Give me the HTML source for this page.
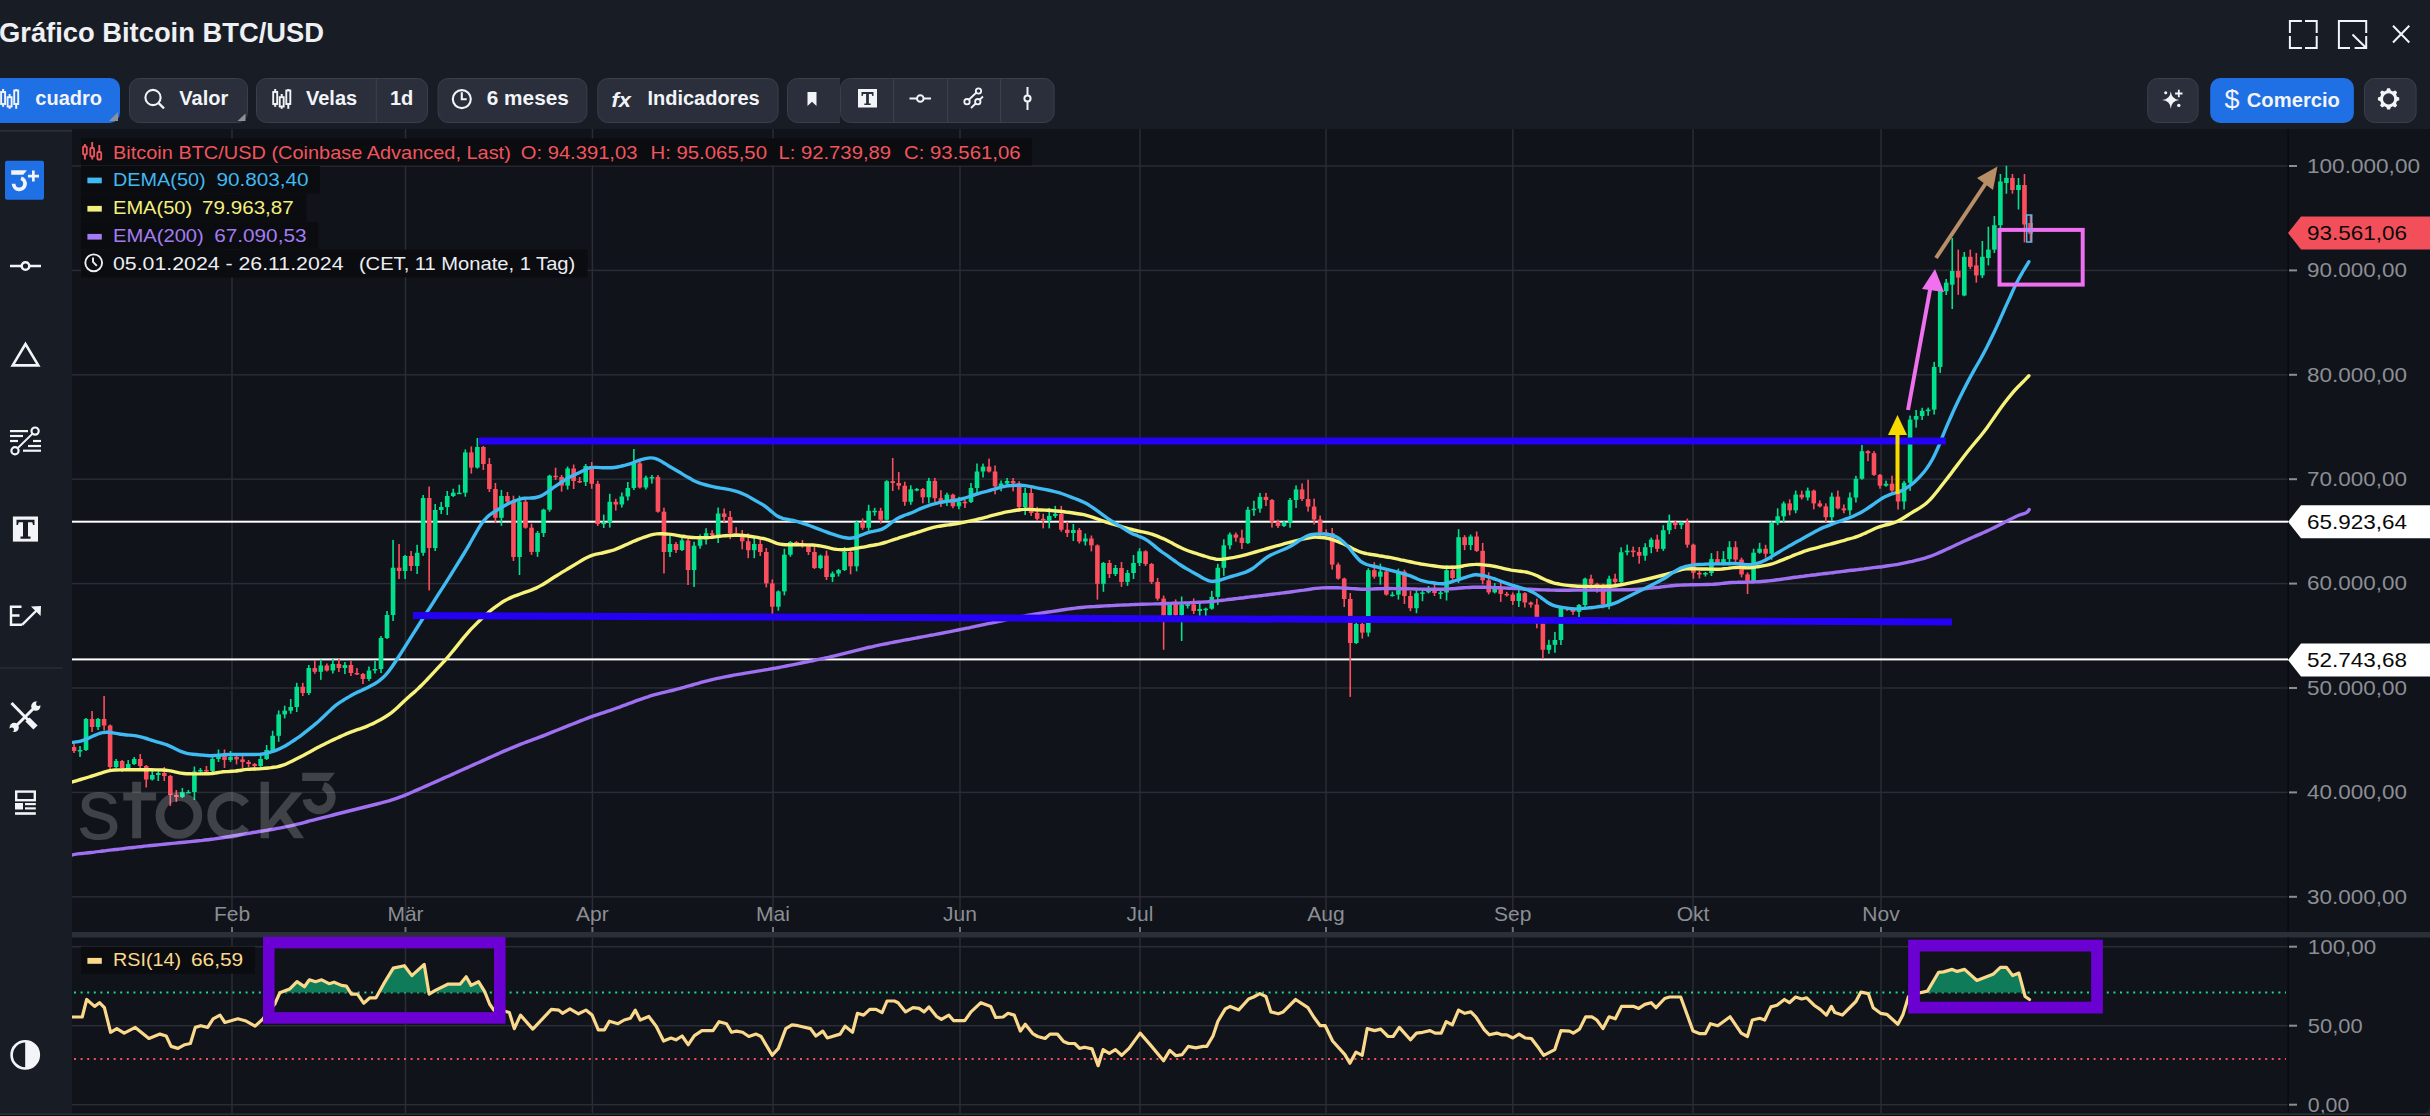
<!DOCTYPE html>
<html><head><meta charset="utf-8"><title>Gráfico Bitcoin BTC/USD</title>
<style>
*{margin:0;padding:0}
html,body{width:2430px;height:1116px;overflow:hidden;background:#181d25;font-family:"Liberation Sans",sans-serif;}
svg{position:absolute;left:0;top:0;display:block}
</style></head><body>
<svg width="2430" height="1116" viewBox="0 0 2430 1116">
<rect x="72" y="129" width="2358" height="987" fill="#10131a"/>
<rect x="72" y="165.25" width="2216" height="1.5" fill="#2a2d35"/>
<rect x="72" y="269.65" width="2216" height="1.5" fill="#2a2d35"/>
<rect x="72" y="374.05" width="2216" height="1.5" fill="#2a2d35"/>
<rect x="72" y="478.45" width="2216" height="1.5" fill="#2a2d35"/>
<rect x="72" y="582.85" width="2216" height="1.5" fill="#2a2d35"/>
<rect x="72" y="687.25" width="2216" height="1.5" fill="#2a2d35"/>
<rect x="72" y="791.65" width="2216" height="1.5" fill="#2a2d35"/>
<rect x="72" y="896.05" width="2216" height="1.5" fill="#2a2d35"/>
<rect x="231.25" y="129" width="1.5" height="793" fill="#2a2d35"/>
<rect x="231.00" y="927" width="2" height="5" fill="#70737a"/>
<rect x="231.25" y="937.5" width="1.5" height="176" fill="#2a2d35"/>
<rect x="404.75" y="129" width="1.5" height="793" fill="#2a2d35"/>
<rect x="404.50" y="927" width="2" height="5" fill="#70737a"/>
<rect x="404.75" y="937.5" width="1.5" height="176" fill="#2a2d35"/>
<rect x="591.65" y="129" width="1.5" height="793" fill="#2a2d35"/>
<rect x="591.40" y="927" width="2" height="5" fill="#70737a"/>
<rect x="591.65" y="937.5" width="1.5" height="176" fill="#2a2d35"/>
<rect x="772.25" y="129" width="1.5" height="793" fill="#2a2d35"/>
<rect x="772.00" y="927" width="2" height="5" fill="#70737a"/>
<rect x="772.25" y="937.5" width="1.5" height="176" fill="#2a2d35"/>
<rect x="959.25" y="129" width="1.5" height="793" fill="#2a2d35"/>
<rect x="959.00" y="927" width="2" height="5" fill="#70737a"/>
<rect x="959.25" y="937.5" width="1.5" height="176" fill="#2a2d35"/>
<rect x="1139.25" y="129" width="1.5" height="793" fill="#2a2d35"/>
<rect x="1139.00" y="927" width="2" height="5" fill="#70737a"/>
<rect x="1139.25" y="937.5" width="1.5" height="176" fill="#2a2d35"/>
<rect x="1325.25" y="129" width="1.5" height="793" fill="#2a2d35"/>
<rect x="1325.00" y="927" width="2" height="5" fill="#70737a"/>
<rect x="1325.25" y="937.5" width="1.5" height="176" fill="#2a2d35"/>
<rect x="1512.05" y="129" width="1.5" height="793" fill="#2a2d35"/>
<rect x="1511.80" y="927" width="2" height="5" fill="#70737a"/>
<rect x="1512.05" y="937.5" width="1.5" height="176" fill="#2a2d35"/>
<rect x="1692.25" y="129" width="1.5" height="793" fill="#2a2d35"/>
<rect x="1692.00" y="927" width="2" height="5" fill="#70737a"/>
<rect x="1692.25" y="937.5" width="1.5" height="176" fill="#2a2d35"/>
<rect x="1880.25" y="129" width="1.5" height="793" fill="#2a2d35"/>
<rect x="1880.00" y="927" width="2" height="5" fill="#70737a"/>
<rect x="1880.25" y="937.5" width="1.5" height="176" fill="#2a2d35"/>
<rect x="72" y="945.95" width="2216" height="1.5" fill="#2a2d35"/>
<rect x="72" y="1024.95" width="2216" height="1.5" fill="#2a2d35"/>
<rect x="72" y="1103.95" width="2216" height="1.5" fill="#2a2d35"/>
<rect x="72" y="932" width="2358" height="5.5" fill="#2b2f37"/>
<rect x="2287.5" y="129" width="1.5" height="803" fill="#090b0f"/>
<rect x="2287.5" y="937.5" width="1.5" height="178" fill="#090b0f"/>
<rect x="72" y="520.70" width="2216" height="2" fill="#ffffff"/>
<rect x="72" y="658.40" width="2216" height="2" fill="#ffffff"/>
<rect x="73.20" y="744.0" width="1.6" height="9.0" fill="#fb4f5d"/>
<rect x="71.70" y="747.0" width="4.6" height="4.0" fill="#fb4f5d"/>
<rect x="79.22" y="746.0" width="1.6" height="11.0" fill="#03e08d"/>
<rect x="77.72" y="750.0" width="4.6" height="1.5" fill="#03e08d"/>
<rect x="85.24" y="718.0" width="1.6" height="33.0" fill="#03e08d"/>
<rect x="83.74" y="719.0" width="4.6" height="31.0" fill="#03e08d"/>
<rect x="91.26" y="711.0" width="1.6" height="21.0" fill="#fb4f5d"/>
<rect x="89.76" y="719.0" width="4.6" height="8.0" fill="#fb4f5d"/>
<rect x="97.28" y="718.0" width="1.6" height="12.0" fill="#03e08d"/>
<rect x="95.78" y="719.0" width="4.6" height="8.0" fill="#03e08d"/>
<rect x="103.30" y="696.0" width="1.6" height="34.5" fill="#fb4f5d"/>
<rect x="101.80" y="719.0" width="4.6" height="6.5" fill="#fb4f5d"/>
<rect x="109.32" y="724.5" width="1.6" height="47.5" fill="#fb4f5d"/>
<rect x="107.82" y="725.5" width="4.6" height="41.5" fill="#fb4f5d"/>
<rect x="115.34" y="759.0" width="1.6" height="9.0" fill="#03e08d"/>
<rect x="113.84" y="761.0" width="4.6" height="6.0" fill="#03e08d"/>
<rect x="121.36" y="760.0" width="1.6" height="12.0" fill="#fb4f5d"/>
<rect x="119.86" y="761.0" width="4.6" height="7.0" fill="#fb4f5d"/>
<rect x="127.38" y="760.0" width="1.6" height="9.0" fill="#03e08d"/>
<rect x="125.88" y="764.0" width="4.6" height="4.0" fill="#03e08d"/>
<rect x="133.40" y="757.0" width="1.6" height="8.0" fill="#03e08d"/>
<rect x="131.90" y="759.0" width="4.6" height="5.0" fill="#03e08d"/>
<rect x="139.42" y="754.0" width="1.6" height="16.0" fill="#fb4f5d"/>
<rect x="137.92" y="759.0" width="4.6" height="7.0" fill="#fb4f5d"/>
<rect x="145.44" y="765.0" width="1.6" height="22.5" fill="#fb4f5d"/>
<rect x="143.94" y="766.0" width="4.6" height="13.5" fill="#fb4f5d"/>
<rect x="151.46" y="770.0" width="1.6" height="10.5" fill="#03e08d"/>
<rect x="149.96" y="775.0" width="4.6" height="4.5" fill="#03e08d"/>
<rect x="157.48" y="771.0" width="1.6" height="10.0" fill="#03e08d"/>
<rect x="155.98" y="773.0" width="4.6" height="2.0" fill="#03e08d"/>
<rect x="163.50" y="767.0" width="1.6" height="14.0" fill="#fb4f5d"/>
<rect x="162.00" y="773.0" width="4.6" height="3.0" fill="#fb4f5d"/>
<rect x="169.52" y="775.0" width="1.6" height="31.0" fill="#fb4f5d"/>
<rect x="168.02" y="776.0" width="4.6" height="19.0" fill="#fb4f5d"/>
<rect x="175.54" y="790.0" width="1.6" height="12.0" fill="#fb4f5d"/>
<rect x="174.04" y="795.0" width="4.6" height="2.0" fill="#fb4f5d"/>
<rect x="181.56" y="788.0" width="1.6" height="10.0" fill="#03e08d"/>
<rect x="180.06" y="792.0" width="4.6" height="5.0" fill="#03e08d"/>
<rect x="187.58" y="790.0" width="1.6" height="3.0" fill="#03e08d"/>
<rect x="186.08" y="792.0" width="4.6" height="1.5" fill="#03e08d"/>
<rect x="193.60" y="766.5" width="1.6" height="33.5" fill="#03e08d"/>
<rect x="192.10" y="771.5" width="4.6" height="20.5" fill="#03e08d"/>
<rect x="199.62" y="768.0" width="1.6" height="6.5" fill="#03e08d"/>
<rect x="198.12" y="770.0" width="4.6" height="1.5" fill="#03e08d"/>
<rect x="205.64" y="766.0" width="1.6" height="7.0" fill="#fb4f5d"/>
<rect x="204.14" y="770.0" width="4.6" height="1.5" fill="#fb4f5d"/>
<rect x="211.66" y="754.0" width="1.6" height="18.0" fill="#03e08d"/>
<rect x="210.16" y="759.0" width="4.6" height="12.0" fill="#03e08d"/>
<rect x="217.68" y="749.5" width="1.6" height="12.5" fill="#03e08d"/>
<rect x="216.18" y="754.5" width="4.6" height="4.5" fill="#03e08d"/>
<rect x="223.70" y="749.5" width="1.6" height="18.5" fill="#fb4f5d"/>
<rect x="222.20" y="754.5" width="4.6" height="5.5" fill="#fb4f5d"/>
<rect x="229.72" y="751.0" width="1.6" height="11.0" fill="#03e08d"/>
<rect x="228.22" y="757.0" width="4.6" height="3.0" fill="#03e08d"/>
<rect x="235.74" y="756.0" width="1.6" height="8.4" fill="#fb4f5d"/>
<rect x="234.24" y="757.0" width="4.6" height="2.4" fill="#fb4f5d"/>
<rect x="241.76" y="754.4" width="1.6" height="13.6" fill="#fb4f5d"/>
<rect x="240.26" y="759.4" width="4.6" height="2.6" fill="#fb4f5d"/>
<rect x="247.78" y="760.0" width="1.6" height="7.0" fill="#fb4f5d"/>
<rect x="246.28" y="762.0" width="4.6" height="2.0" fill="#fb4f5d"/>
<rect x="253.80" y="763.0" width="1.6" height="8.0" fill="#fb4f5d"/>
<rect x="252.30" y="764.0" width="4.6" height="2.0" fill="#fb4f5d"/>
<rect x="259.82" y="753.0" width="1.6" height="14.0" fill="#03e08d"/>
<rect x="258.32" y="759.0" width="4.6" height="7.0" fill="#03e08d"/>
<rect x="265.84" y="745.0" width="1.6" height="15.0" fill="#03e08d"/>
<rect x="264.34" y="750.0" width="4.6" height="9.0" fill="#03e08d"/>
<rect x="271.86" y="730.8" width="1.6" height="21.2" fill="#03e08d"/>
<rect x="270.36" y="735.8" width="4.6" height="14.2" fill="#03e08d"/>
<rect x="277.88" y="710.4" width="1.6" height="31.4" fill="#03e08d"/>
<rect x="276.38" y="714.4" width="4.6" height="21.4" fill="#03e08d"/>
<rect x="283.90" y="705.7" width="1.6" height="12.7" fill="#03e08d"/>
<rect x="282.40" y="710.7" width="4.6" height="3.7" fill="#03e08d"/>
<rect x="289.92" y="699.0" width="1.6" height="14.7" fill="#03e08d"/>
<rect x="288.42" y="707.0" width="4.6" height="3.7" fill="#03e08d"/>
<rect x="295.94" y="682.8" width="1.6" height="29.2" fill="#03e08d"/>
<rect x="294.44" y="686.8" width="4.6" height="20.2" fill="#03e08d"/>
<rect x="301.96" y="682.8" width="1.6" height="13.2" fill="#fb4f5d"/>
<rect x="300.46" y="686.8" width="4.6" height="6.2" fill="#fb4f5d"/>
<rect x="307.98" y="665.0" width="1.6" height="30.0" fill="#03e08d"/>
<rect x="306.48" y="668.0" width="4.6" height="25.0" fill="#03e08d"/>
<rect x="314.00" y="660.0" width="1.6" height="13.8" fill="#fb4f5d"/>
<rect x="312.50" y="668.0" width="4.6" height="3.8" fill="#fb4f5d"/>
<rect x="320.02" y="659.5" width="1.6" height="20.3" fill="#03e08d"/>
<rect x="318.52" y="665.5" width="4.6" height="6.3" fill="#03e08d"/>
<rect x="326.04" y="663.5" width="1.6" height="8.0" fill="#fb4f5d"/>
<rect x="324.54" y="665.5" width="4.6" height="5.0" fill="#fb4f5d"/>
<rect x="332.06" y="659.0" width="1.6" height="14.5" fill="#03e08d"/>
<rect x="330.56" y="664.0" width="4.6" height="6.5" fill="#03e08d"/>
<rect x="338.08" y="659.0" width="1.6" height="13.0" fill="#fb4f5d"/>
<rect x="336.58" y="664.0" width="4.6" height="4.0" fill="#fb4f5d"/>
<rect x="344.10" y="662.0" width="1.6" height="12.0" fill="#03e08d"/>
<rect x="342.60" y="665.0" width="4.6" height="3.0" fill="#03e08d"/>
<rect x="350.12" y="661.0" width="1.6" height="15.0" fill="#fb4f5d"/>
<rect x="348.62" y="665.0" width="4.6" height="8.0" fill="#fb4f5d"/>
<rect x="356.14" y="668.0" width="1.6" height="7.0" fill="#fb4f5d"/>
<rect x="354.64" y="673.0" width="4.6" height="1.5" fill="#fb4f5d"/>
<rect x="362.16" y="673.0" width="1.6" height="11.0" fill="#fb4f5d"/>
<rect x="360.66" y="674.0" width="4.6" height="5.0" fill="#fb4f5d"/>
<rect x="368.18" y="666.5" width="1.6" height="14.5" fill="#03e08d"/>
<rect x="366.68" y="670.5" width="4.6" height="8.5" fill="#03e08d"/>
<rect x="374.20" y="661.0" width="1.6" height="12.5" fill="#03e08d"/>
<rect x="372.70" y="669.0" width="4.6" height="1.5" fill="#03e08d"/>
<rect x="380.22" y="636.0" width="1.6" height="37.0" fill="#03e08d"/>
<rect x="378.72" y="638.0" width="4.6" height="31.0" fill="#03e08d"/>
<rect x="386.24" y="611.0" width="1.6" height="28.0" fill="#03e08d"/>
<rect x="384.74" y="615.0" width="4.6" height="23.0" fill="#03e08d"/>
<rect x="392.26" y="540.0" width="1.6" height="81.0" fill="#03e08d"/>
<rect x="390.76" y="567.7" width="4.6" height="47.3" fill="#03e08d"/>
<rect x="398.28" y="544.0" width="1.6" height="35.0" fill="#fb4f5d"/>
<rect x="396.78" y="567.7" width="4.6" height="3.3" fill="#fb4f5d"/>
<rect x="404.30" y="555.0" width="1.6" height="24.0" fill="#03e08d"/>
<rect x="402.80" y="556.0" width="4.6" height="15.0" fill="#03e08d"/>
<rect x="410.32" y="551.0" width="1.6" height="20.0" fill="#fb4f5d"/>
<rect x="408.82" y="556.0" width="4.6" height="10.0" fill="#fb4f5d"/>
<rect x="416.34" y="544.8" width="1.6" height="29.2" fill="#03e08d"/>
<rect x="414.84" y="552.8" width="4.6" height="13.2" fill="#03e08d"/>
<rect x="422.36" y="495.0" width="1.6" height="60.8" fill="#03e08d"/>
<rect x="420.86" y="498.0" width="4.6" height="54.8" fill="#03e08d"/>
<rect x="428.38" y="486.5" width="1.6" height="103.9" fill="#fb4f5d"/>
<rect x="426.88" y="498.0" width="4.6" height="50.0" fill="#fb4f5d"/>
<rect x="434.40" y="504.0" width="1.6" height="47.0" fill="#03e08d"/>
<rect x="432.90" y="510.0" width="4.6" height="38.0" fill="#03e08d"/>
<rect x="440.42" y="502.0" width="1.6" height="12.0" fill="#03e08d"/>
<rect x="438.92" y="507.0" width="4.6" height="3.0" fill="#03e08d"/>
<rect x="446.44" y="491.0" width="1.6" height="24.0" fill="#03e08d"/>
<rect x="444.94" y="496.0" width="4.6" height="11.0" fill="#03e08d"/>
<rect x="452.46" y="488.7" width="1.6" height="8.3" fill="#03e08d"/>
<rect x="450.96" y="492.7" width="4.6" height="3.3" fill="#03e08d"/>
<rect x="458.48" y="484.7" width="1.6" height="9.0" fill="#03e08d"/>
<rect x="456.98" y="492.7" width="4.6" height="1.5" fill="#03e08d"/>
<rect x="464.50" y="449.4" width="1.6" height="47.3" fill="#03e08d"/>
<rect x="463.00" y="452.4" width="4.6" height="40.3" fill="#03e08d"/>
<rect x="470.52" y="446.4" width="1.6" height="27.2" fill="#fb4f5d"/>
<rect x="469.02" y="452.4" width="4.6" height="15.2" fill="#fb4f5d"/>
<rect x="476.54" y="438.0" width="1.6" height="30.6" fill="#03e08d"/>
<rect x="475.04" y="447.0" width="4.6" height="20.6" fill="#03e08d"/>
<rect x="482.56" y="446.0" width="1.6" height="24.0" fill="#fb4f5d"/>
<rect x="481.06" y="447.0" width="4.6" height="17.0" fill="#fb4f5d"/>
<rect x="488.58" y="458.0" width="1.6" height="34.0" fill="#fb4f5d"/>
<rect x="487.08" y="464.0" width="4.6" height="25.0" fill="#fb4f5d"/>
<rect x="494.60" y="483.0" width="1.6" height="39.8" fill="#fb4f5d"/>
<rect x="493.10" y="489.0" width="4.6" height="28.8" fill="#fb4f5d"/>
<rect x="500.62" y="490.0" width="1.6" height="35.8" fill="#03e08d"/>
<rect x="499.12" y="496.0" width="4.6" height="21.8" fill="#03e08d"/>
<rect x="506.64" y="492.0" width="1.6" height="12.7" fill="#fb4f5d"/>
<rect x="505.14" y="496.0" width="4.6" height="5.7" fill="#fb4f5d"/>
<rect x="512.66" y="495.7" width="1.6" height="65.3" fill="#fb4f5d"/>
<rect x="511.16" y="501.7" width="4.6" height="55.3" fill="#fb4f5d"/>
<rect x="518.68" y="495.7" width="1.6" height="79.3" fill="#03e08d"/>
<rect x="517.18" y="501.7" width="4.6" height="55.3" fill="#03e08d"/>
<rect x="524.70" y="498.7" width="1.6" height="30.0" fill="#fb4f5d"/>
<rect x="523.20" y="501.7" width="4.6" height="26.0" fill="#fb4f5d"/>
<rect x="530.72" y="523.7" width="1.6" height="31.2" fill="#fb4f5d"/>
<rect x="529.22" y="527.7" width="4.6" height="24.2" fill="#fb4f5d"/>
<rect x="536.74" y="531.0" width="1.6" height="25.9" fill="#03e08d"/>
<rect x="535.24" y="533.0" width="4.6" height="18.9" fill="#03e08d"/>
<rect x="542.76" y="508.7" width="1.6" height="28.3" fill="#03e08d"/>
<rect x="541.26" y="509.7" width="4.6" height="23.3" fill="#03e08d"/>
<rect x="548.78" y="474.7" width="1.6" height="37.0" fill="#03e08d"/>
<rect x="547.28" y="475.7" width="4.6" height="34.0" fill="#03e08d"/>
<rect x="554.80" y="467.7" width="1.6" height="12.3" fill="#fb4f5d"/>
<rect x="553.30" y="475.7" width="4.6" height="1.5" fill="#fb4f5d"/>
<rect x="560.82" y="475.0" width="1.6" height="16.6" fill="#fb4f5d"/>
<rect x="559.32" y="477.0" width="4.6" height="8.6" fill="#fb4f5d"/>
<rect x="566.84" y="466.5" width="1.6" height="23.1" fill="#03e08d"/>
<rect x="565.34" y="468.5" width="4.6" height="17.1" fill="#03e08d"/>
<rect x="572.86" y="464.5" width="1.6" height="24.5" fill="#fb4f5d"/>
<rect x="571.36" y="468.5" width="4.6" height="12.5" fill="#fb4f5d"/>
<rect x="578.88" y="477.0" width="1.6" height="6.0" fill="#fb4f5d"/>
<rect x="577.38" y="481.0" width="4.6" height="1.5" fill="#fb4f5d"/>
<rect x="584.90" y="464.0" width="1.6" height="22.0" fill="#03e08d"/>
<rect x="583.40" y="466.0" width="4.6" height="16.0" fill="#03e08d"/>
<rect x="590.92" y="462.0" width="1.6" height="26.8" fill="#fb4f5d"/>
<rect x="589.42" y="466.0" width="4.6" height="17.8" fill="#fb4f5d"/>
<rect x="596.94" y="480.8" width="1.6" height="45.2" fill="#fb4f5d"/>
<rect x="595.44" y="483.8" width="4.6" height="40.2" fill="#fb4f5d"/>
<rect x="602.96" y="514.6" width="1.6" height="13.4" fill="#03e08d"/>
<rect x="601.46" y="522.6" width="4.6" height="1.5" fill="#03e08d"/>
<rect x="608.98" y="493.8" width="1.6" height="33.8" fill="#03e08d"/>
<rect x="607.48" y="501.8" width="4.6" height="20.8" fill="#03e08d"/>
<rect x="615.00" y="498.8" width="1.6" height="11.7" fill="#fb4f5d"/>
<rect x="613.50" y="501.8" width="4.6" height="2.7" fill="#fb4f5d"/>
<rect x="621.02" y="492.5" width="1.6" height="15.0" fill="#03e08d"/>
<rect x="619.52" y="496.5" width="4.6" height="8.0" fill="#03e08d"/>
<rect x="627.04" y="482.0" width="1.6" height="18.5" fill="#03e08d"/>
<rect x="625.54" y="488.0" width="4.6" height="8.5" fill="#03e08d"/>
<rect x="633.06" y="449.0" width="1.6" height="41.0" fill="#03e08d"/>
<rect x="631.56" y="463.3" width="4.6" height="24.7" fill="#03e08d"/>
<rect x="639.08" y="461.3" width="1.6" height="27.2" fill="#fb4f5d"/>
<rect x="637.58" y="463.3" width="4.6" height="24.2" fill="#fb4f5d"/>
<rect x="645.10" y="475.6" width="1.6" height="13.9" fill="#03e08d"/>
<rect x="643.60" y="477.6" width="4.6" height="9.9" fill="#03e08d"/>
<rect x="651.12" y="475.0" width="1.6" height="8.6" fill="#03e08d"/>
<rect x="649.62" y="477.0" width="4.6" height="1.5" fill="#03e08d"/>
<rect x="657.14" y="475.0" width="1.6" height="37.7" fill="#fb4f5d"/>
<rect x="655.64" y="477.0" width="4.6" height="34.7" fill="#fb4f5d"/>
<rect x="663.16" y="507.7" width="1.6" height="65.8" fill="#fb4f5d"/>
<rect x="661.66" y="511.7" width="4.6" height="40.3" fill="#fb4f5d"/>
<rect x="669.18" y="536.0" width="1.6" height="21.0" fill="#03e08d"/>
<rect x="667.68" y="544.0" width="4.6" height="8.0" fill="#03e08d"/>
<rect x="675.20" y="542.0" width="1.6" height="11.0" fill="#fb4f5d"/>
<rect x="673.70" y="544.0" width="4.6" height="6.0" fill="#fb4f5d"/>
<rect x="681.22" y="537.4" width="1.6" height="13.6" fill="#03e08d"/>
<rect x="679.72" y="540.4" width="4.6" height="9.6" fill="#03e08d"/>
<rect x="687.24" y="538.4" width="1.6" height="46.6" fill="#fb4f5d"/>
<rect x="685.74" y="540.4" width="4.6" height="29.6" fill="#fb4f5d"/>
<rect x="693.26" y="541.7" width="1.6" height="45.3" fill="#03e08d"/>
<rect x="691.76" y="545.7" width="4.6" height="24.3" fill="#03e08d"/>
<rect x="699.28" y="534.5" width="1.6" height="14.2" fill="#03e08d"/>
<rect x="697.78" y="539.5" width="4.6" height="6.2" fill="#03e08d"/>
<rect x="705.30" y="528.2" width="1.6" height="16.3" fill="#03e08d"/>
<rect x="703.80" y="533.2" width="4.6" height="6.3" fill="#03e08d"/>
<rect x="711.32" y="530.2" width="1.6" height="6.8" fill="#fb4f5d"/>
<rect x="709.82" y="533.2" width="4.6" height="1.8" fill="#fb4f5d"/>
<rect x="717.34" y="507.5" width="1.6" height="35.5" fill="#03e08d"/>
<rect x="715.84" y="513.5" width="4.6" height="21.5" fill="#03e08d"/>
<rect x="723.36" y="508.5" width="1.6" height="13.5" fill="#fb4f5d"/>
<rect x="721.86" y="513.5" width="4.6" height="3.5" fill="#fb4f5d"/>
<rect x="729.38" y="511.0" width="1.6" height="28.2" fill="#fb4f5d"/>
<rect x="727.88" y="517.0" width="4.6" height="16.2" fill="#fb4f5d"/>
<rect x="735.40" y="527.2" width="1.6" height="7.8" fill="#fb4f5d"/>
<rect x="733.90" y="533.2" width="4.6" height="1.5" fill="#fb4f5d"/>
<rect x="741.42" y="530.0" width="1.6" height="19.3" fill="#fb4f5d"/>
<rect x="739.92" y="534.0" width="4.6" height="7.3" fill="#fb4f5d"/>
<rect x="747.44" y="533.3" width="1.6" height="24.9" fill="#fb4f5d"/>
<rect x="745.94" y="541.3" width="4.6" height="8.9" fill="#fb4f5d"/>
<rect x="753.46" y="538.0" width="1.6" height="20.2" fill="#03e08d"/>
<rect x="751.96" y="544.0" width="4.6" height="6.2" fill="#03e08d"/>
<rect x="759.48" y="539.0" width="1.6" height="17.0" fill="#fb4f5d"/>
<rect x="757.98" y="544.0" width="4.6" height="8.0" fill="#fb4f5d"/>
<rect x="765.50" y="548.0" width="1.6" height="39.4" fill="#fb4f5d"/>
<rect x="764.00" y="552.0" width="4.6" height="31.4" fill="#fb4f5d"/>
<rect x="771.52" y="579.4" width="1.6" height="34.6" fill="#fb4f5d"/>
<rect x="770.02" y="583.4" width="4.6" height="23.3" fill="#fb4f5d"/>
<rect x="777.54" y="590.4" width="1.6" height="20.3" fill="#03e08d"/>
<rect x="776.04" y="591.4" width="4.6" height="15.3" fill="#03e08d"/>
<rect x="783.56" y="548.7" width="1.6" height="46.7" fill="#03e08d"/>
<rect x="782.06" y="554.7" width="4.6" height="36.7" fill="#03e08d"/>
<rect x="789.58" y="541.0" width="1.6" height="15.7" fill="#03e08d"/>
<rect x="788.08" y="542.0" width="4.6" height="12.7" fill="#03e08d"/>
<rect x="795.60" y="541.0" width="1.6" height="5.0" fill="#fb4f5d"/>
<rect x="794.10" y="542.0" width="4.6" height="2.0" fill="#fb4f5d"/>
<rect x="801.62" y="540.0" width="1.6" height="7.7" fill="#fb4f5d"/>
<rect x="800.12" y="544.0" width="4.6" height="1.7" fill="#fb4f5d"/>
<rect x="807.64" y="544.7" width="1.6" height="10.3" fill="#fb4f5d"/>
<rect x="806.14" y="545.7" width="4.6" height="6.3" fill="#fb4f5d"/>
<rect x="813.66" y="547.0" width="1.6" height="22.0" fill="#fb4f5d"/>
<rect x="812.16" y="552.0" width="4.6" height="16.0" fill="#fb4f5d"/>
<rect x="819.68" y="554.6" width="1.6" height="14.4" fill="#03e08d"/>
<rect x="818.18" y="555.6" width="4.6" height="12.4" fill="#03e08d"/>
<rect x="825.70" y="550.6" width="1.6" height="29.4" fill="#fb4f5d"/>
<rect x="824.20" y="555.6" width="4.6" height="21.4" fill="#fb4f5d"/>
<rect x="831.72" y="571.5" width="1.6" height="10.5" fill="#03e08d"/>
<rect x="830.22" y="573.5" width="4.6" height="3.5" fill="#03e08d"/>
<rect x="837.74" y="569.0" width="1.6" height="7.5" fill="#03e08d"/>
<rect x="836.24" y="570.0" width="4.6" height="3.5" fill="#03e08d"/>
<rect x="843.76" y="547.0" width="1.6" height="24.0" fill="#03e08d"/>
<rect x="842.26" y="552.0" width="4.6" height="18.0" fill="#03e08d"/>
<rect x="849.78" y="551.0" width="1.6" height="23.3" fill="#fb4f5d"/>
<rect x="848.28" y="552.0" width="4.6" height="14.3" fill="#fb4f5d"/>
<rect x="855.80" y="520.4" width="1.6" height="50.9" fill="#03e08d"/>
<rect x="854.30" y="522.4" width="4.6" height="43.9" fill="#03e08d"/>
<rect x="861.82" y="518.4" width="1.6" height="11.4" fill="#fb4f5d"/>
<rect x="860.32" y="522.4" width="4.6" height="5.4" fill="#fb4f5d"/>
<rect x="867.84" y="504.8" width="1.6" height="26.0" fill="#03e08d"/>
<rect x="866.34" y="510.8" width="4.6" height="17.0" fill="#03e08d"/>
<rect x="873.86" y="507.8" width="1.6" height="8.0" fill="#03e08d"/>
<rect x="872.36" y="510.8" width="4.6" height="1.5" fill="#03e08d"/>
<rect x="879.88" y="507.8" width="1.6" height="15.9" fill="#fb4f5d"/>
<rect x="878.38" y="510.8" width="4.6" height="8.9" fill="#fb4f5d"/>
<rect x="885.90" y="480.2" width="1.6" height="40.5" fill="#03e08d"/>
<rect x="884.40" y="481.2" width="4.6" height="38.5" fill="#03e08d"/>
<rect x="891.92" y="458.0" width="1.6" height="33.0" fill="#fb4f5d"/>
<rect x="890.42" y="481.2" width="4.6" height="1.8" fill="#fb4f5d"/>
<rect x="897.94" y="472.0" width="1.6" height="17.7" fill="#fb4f5d"/>
<rect x="896.44" y="483.0" width="4.6" height="2.7" fill="#fb4f5d"/>
<rect x="903.96" y="481.7" width="1.6" height="24.1" fill="#fb4f5d"/>
<rect x="902.46" y="485.7" width="4.6" height="16.1" fill="#fb4f5d"/>
<rect x="909.98" y="485.3" width="1.6" height="19.5" fill="#03e08d"/>
<rect x="908.48" y="489.3" width="4.6" height="12.5" fill="#03e08d"/>
<rect x="916.00" y="488.0" width="1.6" height="3.3" fill="#03e08d"/>
<rect x="914.50" y="489.0" width="4.6" height="1.5" fill="#03e08d"/>
<rect x="922.02" y="488.0" width="1.6" height="15.3" fill="#fb4f5d"/>
<rect x="920.52" y="489.0" width="4.6" height="8.3" fill="#fb4f5d"/>
<rect x="928.04" y="477.9" width="1.6" height="25.4" fill="#03e08d"/>
<rect x="926.54" y="480.9" width="4.6" height="16.4" fill="#03e08d"/>
<rect x="934.06" y="477.9" width="1.6" height="24.3" fill="#fb4f5d"/>
<rect x="932.56" y="480.9" width="4.6" height="17.3" fill="#fb4f5d"/>
<rect x="940.08" y="490.2" width="1.6" height="16.8" fill="#fb4f5d"/>
<rect x="938.58" y="498.2" width="4.6" height="2.8" fill="#fb4f5d"/>
<rect x="946.10" y="492.7" width="1.6" height="13.3" fill="#03e08d"/>
<rect x="944.60" y="494.7" width="4.6" height="6.3" fill="#03e08d"/>
<rect x="952.12" y="493.7" width="1.6" height="14.6" fill="#fb4f5d"/>
<rect x="950.62" y="494.7" width="4.6" height="11.6" fill="#fb4f5d"/>
<rect x="958.14" y="496.8" width="1.6" height="12.5" fill="#03e08d"/>
<rect x="956.64" y="501.8" width="4.6" height="4.5" fill="#03e08d"/>
<rect x="964.16" y="499.8" width="1.6" height="8.2" fill="#fb4f5d"/>
<rect x="962.66" y="501.8" width="4.6" height="1.5" fill="#fb4f5d"/>
<rect x="970.18" y="483.0" width="1.6" height="20.0" fill="#03e08d"/>
<rect x="968.68" y="488.0" width="4.6" height="14.0" fill="#03e08d"/>
<rect x="976.20" y="463.5" width="1.6" height="29.5" fill="#03e08d"/>
<rect x="974.70" y="471.5" width="4.6" height="16.5" fill="#03e08d"/>
<rect x="982.22" y="463.6" width="1.6" height="13.9" fill="#03e08d"/>
<rect x="980.72" y="466.6" width="4.6" height="4.9" fill="#03e08d"/>
<rect x="988.24" y="458.6" width="1.6" height="13.9" fill="#fb4f5d"/>
<rect x="986.74" y="466.6" width="4.6" height="4.9" fill="#fb4f5d"/>
<rect x="994.26" y="465.5" width="1.6" height="28.8" fill="#fb4f5d"/>
<rect x="992.76" y="471.5" width="4.6" height="14.8" fill="#fb4f5d"/>
<rect x="1000.28" y="480.5" width="1.6" height="10.8" fill="#03e08d"/>
<rect x="998.78" y="483.5" width="4.6" height="2.8" fill="#03e08d"/>
<rect x="1006.30" y="478.0" width="1.6" height="7.5" fill="#03e08d"/>
<rect x="1004.80" y="481.0" width="4.6" height="2.5" fill="#03e08d"/>
<rect x="1012.32" y="478.0" width="1.6" height="13.3" fill="#fb4f5d"/>
<rect x="1010.82" y="481.0" width="4.6" height="2.3" fill="#fb4f5d"/>
<rect x="1018.34" y="481.3" width="1.6" height="30.7" fill="#fb4f5d"/>
<rect x="1016.84" y="483.3" width="4.6" height="23.7" fill="#fb4f5d"/>
<rect x="1024.36" y="488.0" width="1.6" height="27.0" fill="#03e08d"/>
<rect x="1022.86" y="493.0" width="4.6" height="14.0" fill="#03e08d"/>
<rect x="1030.38" y="488.0" width="1.6" height="27.9" fill="#fb4f5d"/>
<rect x="1028.88" y="493.0" width="4.6" height="19.9" fill="#fb4f5d"/>
<rect x="1036.40" y="506.9" width="1.6" height="13.9" fill="#fb4f5d"/>
<rect x="1034.90" y="512.9" width="4.6" height="5.9" fill="#fb4f5d"/>
<rect x="1042.42" y="513.8" width="1.6" height="14.6" fill="#fb4f5d"/>
<rect x="1040.92" y="518.8" width="4.6" height="1.6" fill="#fb4f5d"/>
<rect x="1048.44" y="507.9" width="1.6" height="20.5" fill="#03e08d"/>
<rect x="1046.94" y="515.9" width="4.6" height="4.5" fill="#03e08d"/>
<rect x="1054.46" y="505.9" width="1.6" height="12.0" fill="#03e08d"/>
<rect x="1052.96" y="513.9" width="4.6" height="2.0" fill="#03e08d"/>
<rect x="1060.48" y="505.9" width="1.6" height="25.8" fill="#fb4f5d"/>
<rect x="1058.98" y="513.9" width="4.6" height="15.8" fill="#fb4f5d"/>
<rect x="1066.50" y="521.7" width="1.6" height="15.3" fill="#fb4f5d"/>
<rect x="1065.00" y="529.7" width="4.6" height="3.3" fill="#fb4f5d"/>
<rect x="1072.52" y="524.0" width="1.6" height="17.0" fill="#03e08d"/>
<rect x="1071.02" y="530.0" width="4.6" height="3.0" fill="#03e08d"/>
<rect x="1078.54" y="528.0" width="1.6" height="15.5" fill="#fb4f5d"/>
<rect x="1077.04" y="530.0" width="4.6" height="11.5" fill="#fb4f5d"/>
<rect x="1084.56" y="533.5" width="1.6" height="12.0" fill="#03e08d"/>
<rect x="1083.06" y="538.5" width="4.6" height="3.0" fill="#03e08d"/>
<rect x="1090.58" y="535.5" width="1.6" height="15.9" fill="#fb4f5d"/>
<rect x="1089.08" y="538.5" width="4.6" height="6.9" fill="#fb4f5d"/>
<rect x="1096.60" y="544.4" width="1.6" height="55.2" fill="#fb4f5d"/>
<rect x="1095.10" y="545.4" width="4.6" height="38.4" fill="#fb4f5d"/>
<rect x="1102.62" y="562.0" width="1.6" height="29.8" fill="#03e08d"/>
<rect x="1101.12" y="563.0" width="4.6" height="20.8" fill="#03e08d"/>
<rect x="1108.64" y="560.0" width="1.6" height="18.0" fill="#fb4f5d"/>
<rect x="1107.14" y="563.0" width="4.6" height="11.0" fill="#fb4f5d"/>
<rect x="1114.66" y="565.0" width="1.6" height="11.0" fill="#03e08d"/>
<rect x="1113.16" y="568.0" width="4.6" height="6.0" fill="#03e08d"/>
<rect x="1120.68" y="562.0" width="1.6" height="24.9" fill="#fb4f5d"/>
<rect x="1119.18" y="568.0" width="4.6" height="13.9" fill="#fb4f5d"/>
<rect x="1126.70" y="570.0" width="1.6" height="15.9" fill="#03e08d"/>
<rect x="1125.20" y="573.0" width="4.6" height="8.9" fill="#03e08d"/>
<rect x="1132.72" y="555.0" width="1.6" height="24.0" fill="#03e08d"/>
<rect x="1131.22" y="563.0" width="4.6" height="10.0" fill="#03e08d"/>
<rect x="1138.74" y="548.3" width="1.6" height="17.7" fill="#03e08d"/>
<rect x="1137.24" y="551.3" width="4.6" height="11.7" fill="#03e08d"/>
<rect x="1144.76" y="550.3" width="1.6" height="15.7" fill="#fb4f5d"/>
<rect x="1143.26" y="551.3" width="4.6" height="12.7" fill="#fb4f5d"/>
<rect x="1150.78" y="563.0" width="1.6" height="20.9" fill="#fb4f5d"/>
<rect x="1149.28" y="564.0" width="4.6" height="17.9" fill="#fb4f5d"/>
<rect x="1156.80" y="577.9" width="1.6" height="22.7" fill="#fb4f5d"/>
<rect x="1155.30" y="581.9" width="4.6" height="16.7" fill="#fb4f5d"/>
<rect x="1162.82" y="595.6" width="1.6" height="54.2" fill="#fb4f5d"/>
<rect x="1161.32" y="598.6" width="4.6" height="16.8" fill="#fb4f5d"/>
<rect x="1168.84" y="602.4" width="1.6" height="17.0" fill="#03e08d"/>
<rect x="1167.34" y="604.4" width="4.6" height="11.0" fill="#03e08d"/>
<rect x="1174.86" y="599.4" width="1.6" height="20.6" fill="#fb4f5d"/>
<rect x="1173.36" y="604.4" width="4.6" height="10.6" fill="#fb4f5d"/>
<rect x="1180.88" y="596.5" width="1.6" height="44.5" fill="#03e08d"/>
<rect x="1179.38" y="604.5" width="4.6" height="10.5" fill="#03e08d"/>
<rect x="1186.90" y="603.4" width="1.6" height="5.1" fill="#03e08d"/>
<rect x="1185.40" y="604.4" width="4.6" height="1.5" fill="#03e08d"/>
<rect x="1192.92" y="598.4" width="1.6" height="15.6" fill="#fb4f5d"/>
<rect x="1191.42" y="604.4" width="4.6" height="6.6" fill="#fb4f5d"/>
<rect x="1198.94" y="601.0" width="1.6" height="16.0" fill="#03e08d"/>
<rect x="1197.44" y="609.0" width="4.6" height="2.0" fill="#03e08d"/>
<rect x="1204.96" y="607.7" width="1.6" height="9.3" fill="#03e08d"/>
<rect x="1203.46" y="608.7" width="4.6" height="1.5" fill="#03e08d"/>
<rect x="1210.98" y="590.9" width="1.6" height="18.8" fill="#03e08d"/>
<rect x="1209.48" y="596.9" width="4.6" height="11.8" fill="#03e08d"/>
<rect x="1217.00" y="563.8" width="1.6" height="41.1" fill="#03e08d"/>
<rect x="1215.50" y="567.8" width="4.6" height="29.1" fill="#03e08d"/>
<rect x="1223.02" y="539.3" width="1.6" height="36.5" fill="#03e08d"/>
<rect x="1221.52" y="545.3" width="4.6" height="22.5" fill="#03e08d"/>
<rect x="1229.04" y="532.5" width="1.6" height="16.8" fill="#03e08d"/>
<rect x="1227.54" y="534.5" width="4.6" height="10.8" fill="#03e08d"/>
<rect x="1235.06" y="532.5" width="1.6" height="9.2" fill="#fb4f5d"/>
<rect x="1233.56" y="534.5" width="4.6" height="3.2" fill="#fb4f5d"/>
<rect x="1241.08" y="529.7" width="1.6" height="19.3" fill="#fb4f5d"/>
<rect x="1239.58" y="537.7" width="4.6" height="5.3" fill="#fb4f5d"/>
<rect x="1247.10" y="506.8" width="1.6" height="37.2" fill="#03e08d"/>
<rect x="1245.60" y="509.8" width="4.6" height="33.2" fill="#03e08d"/>
<rect x="1253.12" y="500.7" width="1.6" height="15.1" fill="#03e08d"/>
<rect x="1251.62" y="508.7" width="4.6" height="1.5" fill="#03e08d"/>
<rect x="1259.14" y="492.9" width="1.6" height="19.8" fill="#03e08d"/>
<rect x="1257.64" y="496.9" width="4.6" height="11.8" fill="#03e08d"/>
<rect x="1265.16" y="492.9" width="1.6" height="13.1" fill="#fb4f5d"/>
<rect x="1263.66" y="496.9" width="4.6" height="3.1" fill="#fb4f5d"/>
<rect x="1271.18" y="499.0" width="1.6" height="28.6" fill="#fb4f5d"/>
<rect x="1269.68" y="500.0" width="4.6" height="21.6" fill="#fb4f5d"/>
<rect x="1277.20" y="519.6" width="1.6" height="8.4" fill="#fb4f5d"/>
<rect x="1275.70" y="521.6" width="4.6" height="4.4" fill="#fb4f5d"/>
<rect x="1283.22" y="520.7" width="1.6" height="6.3" fill="#03e08d"/>
<rect x="1281.72" y="522.7" width="4.6" height="3.3" fill="#03e08d"/>
<rect x="1289.24" y="498.0" width="1.6" height="29.7" fill="#03e08d"/>
<rect x="1287.74" y="500.0" width="4.6" height="22.7" fill="#03e08d"/>
<rect x="1295.26" y="485.4" width="1.6" height="22.6" fill="#03e08d"/>
<rect x="1293.76" y="489.4" width="4.6" height="10.6" fill="#03e08d"/>
<rect x="1301.28" y="483.4" width="1.6" height="17.6" fill="#fb4f5d"/>
<rect x="1299.78" y="489.4" width="4.6" height="9.6" fill="#fb4f5d"/>
<rect x="1307.30" y="479.7" width="1.6" height="31.9" fill="#fb4f5d"/>
<rect x="1305.80" y="499.0" width="4.6" height="7.6" fill="#fb4f5d"/>
<rect x="1313.32" y="498.6" width="1.6" height="25.9" fill="#fb4f5d"/>
<rect x="1311.82" y="506.6" width="4.6" height="12.9" fill="#fb4f5d"/>
<rect x="1319.34" y="515.5" width="1.6" height="22.9" fill="#fb4f5d"/>
<rect x="1317.84" y="519.5" width="4.6" height="12.9" fill="#fb4f5d"/>
<rect x="1325.36" y="529.4" width="1.6" height="5.6" fill="#fb4f5d"/>
<rect x="1323.86" y="532.4" width="4.6" height="1.5" fill="#fb4f5d"/>
<rect x="1331.38" y="528.0" width="1.6" height="41.6" fill="#fb4f5d"/>
<rect x="1329.88" y="533.0" width="4.6" height="31.6" fill="#fb4f5d"/>
<rect x="1337.40" y="562.6" width="1.6" height="17.0" fill="#fb4f5d"/>
<rect x="1335.90" y="564.6" width="4.6" height="14.0" fill="#fb4f5d"/>
<rect x="1343.42" y="577.6" width="1.6" height="29.4" fill="#fb4f5d"/>
<rect x="1341.92" y="578.6" width="4.6" height="20.4" fill="#fb4f5d"/>
<rect x="1349.44" y="593.0" width="1.6" height="103.9" fill="#fb4f5d"/>
<rect x="1347.94" y="599.0" width="4.6" height="44.0" fill="#fb4f5d"/>
<rect x="1355.46" y="618.0" width="1.6" height="26.0" fill="#03e08d"/>
<rect x="1353.96" y="624.0" width="4.6" height="19.0" fill="#03e08d"/>
<rect x="1361.48" y="619.0" width="1.6" height="19.6" fill="#fb4f5d"/>
<rect x="1359.98" y="624.0" width="4.6" height="8.6" fill="#fb4f5d"/>
<rect x="1367.50" y="568.2" width="1.6" height="68.4" fill="#03e08d"/>
<rect x="1366.00" y="570.2" width="4.6" height="62.4" fill="#03e08d"/>
<rect x="1373.52" y="562.2" width="1.6" height="16.5" fill="#fb4f5d"/>
<rect x="1372.02" y="570.2" width="4.6" height="6.5" fill="#fb4f5d"/>
<rect x="1379.54" y="563.6" width="1.6" height="21.1" fill="#03e08d"/>
<rect x="1378.04" y="571.6" width="4.6" height="5.1" fill="#03e08d"/>
<rect x="1385.56" y="569.6" width="1.6" height="26.0" fill="#fb4f5d"/>
<rect x="1384.06" y="571.6" width="4.6" height="23.0" fill="#fb4f5d"/>
<rect x="1391.58" y="591.6" width="1.6" height="5.0" fill="#03e08d"/>
<rect x="1390.08" y="594.6" width="4.6" height="1.5" fill="#03e08d"/>
<rect x="1397.60" y="568.6" width="1.6" height="31.0" fill="#03e08d"/>
<rect x="1396.10" y="571.6" width="4.6" height="23.0" fill="#03e08d"/>
<rect x="1403.62" y="569.6" width="1.6" height="34.4" fill="#fb4f5d"/>
<rect x="1402.12" y="571.6" width="4.6" height="24.4" fill="#fb4f5d"/>
<rect x="1409.64" y="591.0" width="1.6" height="20.2" fill="#fb4f5d"/>
<rect x="1408.14" y="596.0" width="4.6" height="12.2" fill="#fb4f5d"/>
<rect x="1415.66" y="590.2" width="1.6" height="23.0" fill="#03e08d"/>
<rect x="1414.16" y="593.2" width="4.6" height="15.0" fill="#03e08d"/>
<rect x="1421.68" y="588.4" width="1.6" height="12.8" fill="#03e08d"/>
<rect x="1420.18" y="592.4" width="4.6" height="1.5" fill="#03e08d"/>
<rect x="1427.70" y="586.0" width="1.6" height="7.4" fill="#03e08d"/>
<rect x="1426.20" y="588.0" width="4.6" height="4.4" fill="#03e08d"/>
<rect x="1433.72" y="582.0" width="1.6" height="14.0" fill="#fb4f5d"/>
<rect x="1432.22" y="588.0" width="4.6" height="5.0" fill="#fb4f5d"/>
<rect x="1439.74" y="588.5" width="1.6" height="10.5" fill="#03e08d"/>
<rect x="1438.24" y="592.5" width="4.6" height="1.5" fill="#03e08d"/>
<rect x="1445.76" y="565.2" width="1.6" height="35.3" fill="#03e08d"/>
<rect x="1444.26" y="570.2" width="4.6" height="22.3" fill="#03e08d"/>
<rect x="1451.78" y="565.2" width="1.6" height="16.8" fill="#fb4f5d"/>
<rect x="1450.28" y="570.2" width="4.6" height="7.8" fill="#fb4f5d"/>
<rect x="1457.80" y="529.2" width="1.6" height="53.8" fill="#03e08d"/>
<rect x="1456.30" y="537.2" width="4.6" height="40.8" fill="#03e08d"/>
<rect x="1463.82" y="535.2" width="1.6" height="14.9" fill="#fb4f5d"/>
<rect x="1462.32" y="537.2" width="4.6" height="7.9" fill="#fb4f5d"/>
<rect x="1469.84" y="534.5" width="1.6" height="15.6" fill="#03e08d"/>
<rect x="1468.34" y="536.5" width="4.6" height="8.6" fill="#03e08d"/>
<rect x="1475.86" y="531.5" width="1.6" height="20.4" fill="#fb4f5d"/>
<rect x="1474.36" y="536.5" width="4.6" height="14.4" fill="#fb4f5d"/>
<rect x="1481.88" y="542.9" width="1.6" height="41.4" fill="#fb4f5d"/>
<rect x="1480.38" y="550.9" width="4.6" height="29.4" fill="#fb4f5d"/>
<rect x="1487.90" y="572.3" width="1.6" height="22.1" fill="#fb4f5d"/>
<rect x="1486.40" y="580.3" width="4.6" height="12.1" fill="#fb4f5d"/>
<rect x="1493.92" y="583.1" width="1.6" height="10.3" fill="#03e08d"/>
<rect x="1492.42" y="588.1" width="4.6" height="4.3" fill="#03e08d"/>
<rect x="1499.94" y="580.1" width="1.6" height="21.8" fill="#fb4f5d"/>
<rect x="1498.44" y="588.1" width="4.6" height="5.8" fill="#fb4f5d"/>
<rect x="1505.96" y="591.9" width="1.6" height="4.7" fill="#fb4f5d"/>
<rect x="1504.46" y="593.9" width="4.6" height="1.5" fill="#fb4f5d"/>
<rect x="1511.98" y="592.6" width="1.6" height="12.4" fill="#fb4f5d"/>
<rect x="1510.48" y="594.6" width="4.6" height="6.4" fill="#fb4f5d"/>
<rect x="1518.00" y="588.2" width="1.6" height="18.8" fill="#03e08d"/>
<rect x="1516.50" y="593.2" width="4.6" height="7.8" fill="#03e08d"/>
<rect x="1524.02" y="592.2" width="1.6" height="15.3" fill="#fb4f5d"/>
<rect x="1522.52" y="593.2" width="4.6" height="9.3" fill="#fb4f5d"/>
<rect x="1530.04" y="601.5" width="1.6" height="6.1" fill="#fb4f5d"/>
<rect x="1528.54" y="602.5" width="4.6" height="2.1" fill="#fb4f5d"/>
<rect x="1536.06" y="598.6" width="1.6" height="29.7" fill="#fb4f5d"/>
<rect x="1534.56" y="604.6" width="4.6" height="18.7" fill="#fb4f5d"/>
<rect x="1542.08" y="618.3" width="1.6" height="40.7" fill="#fb4f5d"/>
<rect x="1540.58" y="623.3" width="4.6" height="26.5" fill="#fb4f5d"/>
<rect x="1548.10" y="639.8" width="1.6" height="14.0" fill="#03e08d"/>
<rect x="1546.60" y="644.8" width="4.6" height="5.0" fill="#03e08d"/>
<rect x="1554.12" y="632.0" width="1.6" height="20.8" fill="#03e08d"/>
<rect x="1552.62" y="640.0" width="4.6" height="4.8" fill="#03e08d"/>
<rect x="1560.14" y="606.7" width="1.6" height="38.3" fill="#03e08d"/>
<rect x="1558.64" y="607.7" width="4.6" height="32.3" fill="#03e08d"/>
<rect x="1566.16" y="606.7" width="1.6" height="4.3" fill="#fb4f5d"/>
<rect x="1564.66" y="607.7" width="4.6" height="1.5" fill="#fb4f5d"/>
<rect x="1572.18" y="607.0" width="1.6" height="7.9" fill="#fb4f5d"/>
<rect x="1570.68" y="609.0" width="4.6" height="2.9" fill="#fb4f5d"/>
<rect x="1578.20" y="604.0" width="1.6" height="15.9" fill="#03e08d"/>
<rect x="1576.70" y="605.0" width="4.6" height="6.9" fill="#03e08d"/>
<rect x="1584.22" y="577.7" width="1.6" height="32.3" fill="#03e08d"/>
<rect x="1582.72" y="578.7" width="4.6" height="26.3" fill="#03e08d"/>
<rect x="1590.24" y="574.7" width="1.6" height="14.1" fill="#fb4f5d"/>
<rect x="1588.74" y="578.7" width="4.6" height="5.1" fill="#fb4f5d"/>
<rect x="1596.26" y="582.8" width="1.6" height="9.9" fill="#fb4f5d"/>
<rect x="1594.76" y="583.8" width="4.6" height="1.5" fill="#fb4f5d"/>
<rect x="1602.28" y="583.7" width="1.6" height="24.6" fill="#fb4f5d"/>
<rect x="1600.78" y="584.7" width="4.6" height="19.6" fill="#fb4f5d"/>
<rect x="1608.30" y="575.7" width="1.6" height="33.6" fill="#03e08d"/>
<rect x="1606.80" y="578.7" width="4.6" height="25.6" fill="#03e08d"/>
<rect x="1614.32" y="573.7" width="1.6" height="13.3" fill="#fb4f5d"/>
<rect x="1612.82" y="578.7" width="4.6" height="3.3" fill="#fb4f5d"/>
<rect x="1620.34" y="547.3" width="1.6" height="36.7" fill="#03e08d"/>
<rect x="1618.84" y="552.3" width="4.6" height="29.7" fill="#03e08d"/>
<rect x="1626.36" y="544.6" width="1.6" height="10.7" fill="#03e08d"/>
<rect x="1624.86" y="550.6" width="4.6" height="1.7" fill="#03e08d"/>
<rect x="1632.38" y="546.6" width="1.6" height="10.4" fill="#fb4f5d"/>
<rect x="1630.88" y="550.6" width="4.6" height="1.5" fill="#fb4f5d"/>
<rect x="1638.40" y="547.0" width="1.6" height="16.7" fill="#fb4f5d"/>
<rect x="1636.90" y="552.0" width="4.6" height="3.7" fill="#fb4f5d"/>
<rect x="1644.42" y="543.2" width="1.6" height="17.5" fill="#03e08d"/>
<rect x="1642.92" y="547.2" width="4.6" height="8.5" fill="#03e08d"/>
<rect x="1650.44" y="537.6" width="1.6" height="15.6" fill="#03e08d"/>
<rect x="1648.94" y="539.6" width="4.6" height="7.6" fill="#03e08d"/>
<rect x="1656.46" y="534.6" width="1.6" height="17.3" fill="#fb4f5d"/>
<rect x="1654.96" y="539.6" width="4.6" height="9.3" fill="#fb4f5d"/>
<rect x="1662.48" y="525.2" width="1.6" height="25.7" fill="#03e08d"/>
<rect x="1660.98" y="530.2" width="4.6" height="18.7" fill="#03e08d"/>
<rect x="1668.50" y="514.6" width="1.6" height="19.6" fill="#03e08d"/>
<rect x="1667.00" y="522.6" width="4.6" height="7.6" fill="#03e08d"/>
<rect x="1674.52" y="520.6" width="1.6" height="8.5" fill="#fb4f5d"/>
<rect x="1673.02" y="522.6" width="4.6" height="2.5" fill="#fb4f5d"/>
<rect x="1680.54" y="521.6" width="1.6" height="7.5" fill="#03e08d"/>
<rect x="1679.04" y="522.6" width="4.6" height="2.5" fill="#03e08d"/>
<rect x="1686.56" y="518.6" width="1.6" height="29.1" fill="#fb4f5d"/>
<rect x="1685.06" y="522.6" width="4.6" height="22.1" fill="#fb4f5d"/>
<rect x="1692.58" y="543.7" width="1.6" height="35.1" fill="#fb4f5d"/>
<rect x="1691.08" y="544.7" width="4.6" height="28.1" fill="#fb4f5d"/>
<rect x="1698.60" y="570.8" width="1.6" height="7.7" fill="#fb4f5d"/>
<rect x="1697.10" y="572.8" width="4.6" height="1.7" fill="#fb4f5d"/>
<rect x="1704.62" y="572.0" width="1.6" height="4.5" fill="#03e08d"/>
<rect x="1703.12" y="573.0" width="4.6" height="1.5" fill="#03e08d"/>
<rect x="1710.64" y="553.1" width="1.6" height="22.9" fill="#03e08d"/>
<rect x="1709.14" y="559.1" width="4.6" height="13.9" fill="#03e08d"/>
<rect x="1716.66" y="551.1" width="1.6" height="13.3" fill="#fb4f5d"/>
<rect x="1715.16" y="559.1" width="4.6" height="4.3" fill="#fb4f5d"/>
<rect x="1722.68" y="551.1" width="1.6" height="14.3" fill="#03e08d"/>
<rect x="1721.18" y="559.1" width="4.6" height="4.3" fill="#03e08d"/>
<rect x="1728.70" y="541.2" width="1.6" height="23.9" fill="#03e08d"/>
<rect x="1727.20" y="547.2" width="4.6" height="11.9" fill="#03e08d"/>
<rect x="1734.72" y="541.2" width="1.6" height="21.4" fill="#fb4f5d"/>
<rect x="1733.22" y="547.2" width="4.6" height="12.4" fill="#fb4f5d"/>
<rect x="1740.74" y="557.6" width="1.6" height="19.8" fill="#fb4f5d"/>
<rect x="1739.24" y="559.6" width="4.6" height="14.8" fill="#fb4f5d"/>
<rect x="1746.76" y="572.4" width="1.6" height="21.6" fill="#fb4f5d"/>
<rect x="1745.26" y="574.4" width="4.6" height="6.9" fill="#fb4f5d"/>
<rect x="1752.78" y="548.7" width="1.6" height="34.6" fill="#03e08d"/>
<rect x="1751.28" y="552.7" width="4.6" height="28.6" fill="#03e08d"/>
<rect x="1758.80" y="542.8" width="1.6" height="10.9" fill="#03e08d"/>
<rect x="1757.30" y="548.8" width="4.6" height="3.9" fill="#03e08d"/>
<rect x="1764.82" y="544.8" width="1.6" height="12.9" fill="#fb4f5d"/>
<rect x="1763.32" y="548.8" width="4.6" height="4.9" fill="#fb4f5d"/>
<rect x="1770.84" y="521.2" width="1.6" height="38.5" fill="#03e08d"/>
<rect x="1769.34" y="523.2" width="4.6" height="30.5" fill="#03e08d"/>
<rect x="1776.86" y="508.3" width="1.6" height="16.9" fill="#03e08d"/>
<rect x="1775.36" y="516.3" width="4.6" height="6.9" fill="#03e08d"/>
<rect x="1782.88" y="501.4" width="1.6" height="20.9" fill="#03e08d"/>
<rect x="1781.38" y="503.4" width="4.6" height="12.9" fill="#03e08d"/>
<rect x="1788.90" y="499.4" width="1.6" height="15.9" fill="#fb4f5d"/>
<rect x="1787.40" y="503.4" width="4.6" height="6.9" fill="#fb4f5d"/>
<rect x="1794.92" y="490.6" width="1.6" height="22.7" fill="#03e08d"/>
<rect x="1793.42" y="494.6" width="4.6" height="15.7" fill="#03e08d"/>
<rect x="1800.94" y="490.6" width="1.6" height="8.9" fill="#fb4f5d"/>
<rect x="1799.44" y="494.6" width="4.6" height="2.9" fill="#fb4f5d"/>
<rect x="1806.96" y="487.6" width="1.6" height="12.9" fill="#03e08d"/>
<rect x="1805.46" y="490.6" width="4.6" height="6.9" fill="#03e08d"/>
<rect x="1812.98" y="489.6" width="1.6" height="19.8" fill="#fb4f5d"/>
<rect x="1811.48" y="490.6" width="4.6" height="12.8" fill="#fb4f5d"/>
<rect x="1819.00" y="500.4" width="1.6" height="7.0" fill="#fb4f5d"/>
<rect x="1817.50" y="503.4" width="4.6" height="3.0" fill="#fb4f5d"/>
<rect x="1825.02" y="503.4" width="1.6" height="18.8" fill="#fb4f5d"/>
<rect x="1823.52" y="506.4" width="4.6" height="10.8" fill="#fb4f5d"/>
<rect x="1831.04" y="492.6" width="1.6" height="28.6" fill="#03e08d"/>
<rect x="1829.54" y="496.6" width="4.6" height="20.6" fill="#03e08d"/>
<rect x="1837.06" y="490.6" width="1.6" height="18.8" fill="#fb4f5d"/>
<rect x="1835.56" y="496.6" width="4.6" height="11.8" fill="#fb4f5d"/>
<rect x="1843.08" y="504.4" width="1.6" height="8.9" fill="#fb4f5d"/>
<rect x="1841.58" y="508.4" width="4.6" height="1.9" fill="#fb4f5d"/>
<rect x="1849.10" y="492.5" width="1.6" height="22.8" fill="#03e08d"/>
<rect x="1847.60" y="497.5" width="4.6" height="12.8" fill="#03e08d"/>
<rect x="1855.12" y="475.8" width="1.6" height="26.7" fill="#03e08d"/>
<rect x="1853.62" y="478.8" width="4.6" height="18.7" fill="#03e08d"/>
<rect x="1861.14" y="445.0" width="1.6" height="34.8" fill="#03e08d"/>
<rect x="1859.64" y="451.2" width="4.6" height="27.6" fill="#03e08d"/>
<rect x="1867.16" y="450.2" width="1.6" height="11.0" fill="#fb4f5d"/>
<rect x="1865.66" y="451.2" width="4.6" height="2.0" fill="#fb4f5d"/>
<rect x="1873.18" y="451.2" width="1.6" height="24.7" fill="#fb4f5d"/>
<rect x="1871.68" y="453.2" width="4.6" height="21.7" fill="#fb4f5d"/>
<rect x="1879.20" y="473.9" width="1.6" height="14.8" fill="#fb4f5d"/>
<rect x="1877.70" y="474.9" width="4.6" height="10.8" fill="#fb4f5d"/>
<rect x="1885.22" y="480.7" width="1.6" height="6.0" fill="#03e08d"/>
<rect x="1883.72" y="483.7" width="4.6" height="2.0" fill="#03e08d"/>
<rect x="1891.24" y="475.7" width="1.6" height="16.9" fill="#fb4f5d"/>
<rect x="1889.74" y="483.7" width="4.6" height="6.9" fill="#fb4f5d"/>
<rect x="1897.26" y="487.6" width="1.6" height="21.9" fill="#fb4f5d"/>
<rect x="1895.76" y="490.6" width="4.6" height="10.9" fill="#fb4f5d"/>
<rect x="1903.28" y="480.8" width="1.6" height="28.7" fill="#03e08d"/>
<rect x="1901.78" y="482.8" width="4.6" height="18.7" fill="#03e08d"/>
<rect x="1909.30" y="415.6" width="1.6" height="75.2" fill="#03e08d"/>
<rect x="1907.80" y="419.6" width="4.6" height="63.2" fill="#03e08d"/>
<rect x="1915.32" y="410.0" width="1.6" height="17.6" fill="#03e08d"/>
<rect x="1913.82" y="416.0" width="4.6" height="3.6" fill="#03e08d"/>
<rect x="1921.34" y="407.8" width="1.6" height="12.2" fill="#03e08d"/>
<rect x="1919.84" y="410.8" width="4.6" height="5.2" fill="#03e08d"/>
<rect x="1927.36" y="407.6" width="1.6" height="8.2" fill="#03e08d"/>
<rect x="1925.86" y="409.6" width="4.6" height="1.5" fill="#03e08d"/>
<rect x="1933.38" y="361.9" width="1.6" height="52.7" fill="#03e08d"/>
<rect x="1931.88" y="366.9" width="4.6" height="42.7" fill="#03e08d"/>
<rect x="1939.40" y="286.4" width="1.6" height="86.5" fill="#03e08d"/>
<rect x="1937.90" y="290.4" width="4.6" height="76.5" fill="#03e08d"/>
<rect x="1945.42" y="279.0" width="1.6" height="16.0" fill="#03e08d"/>
<rect x="1943.92" y="282.6" width="4.6" height="8.6" fill="#03e08d"/>
<rect x="1951.44" y="238.0" width="1.6" height="71.0" fill="#03e08d"/>
<rect x="1949.94" y="271.0" width="4.6" height="13.7" fill="#03e08d"/>
<rect x="1957.46" y="249.6" width="1.6" height="45.2" fill="#fb4f5d"/>
<rect x="1955.96" y="271.0" width="4.6" height="6.6" fill="#fb4f5d"/>
<rect x="1963.48" y="252.0" width="1.6" height="44.2" fill="#03e08d"/>
<rect x="1961.98" y="256.8" width="4.6" height="38.7" fill="#03e08d"/>
<rect x="1969.50" y="249.6" width="1.6" height="19.4" fill="#fb4f5d"/>
<rect x="1968.00" y="256.8" width="4.6" height="10.0" fill="#fb4f5d"/>
<rect x="1975.52" y="253.0" width="1.6" height="29.6" fill="#fb4f5d"/>
<rect x="1974.02" y="265.4" width="4.6" height="10.0" fill="#fb4f5d"/>
<rect x="1981.54" y="241.0" width="1.6" height="37.0" fill="#03e08d"/>
<rect x="1980.04" y="256.8" width="4.6" height="18.6" fill="#03e08d"/>
<rect x="1987.56" y="226.7" width="1.6" height="38.7" fill="#03e08d"/>
<rect x="1986.06" y="249.6" width="4.6" height="8.4" fill="#03e08d"/>
<rect x="1993.58" y="216.0" width="1.6" height="37.0" fill="#03e08d"/>
<rect x="1992.08" y="225.2" width="4.6" height="24.4" fill="#03e08d"/>
<rect x="1999.60" y="174.0" width="1.6" height="54.0" fill="#03e08d"/>
<rect x="1998.10" y="181.5" width="4.6" height="43.7" fill="#03e08d"/>
<rect x="2005.62" y="165.7" width="1.6" height="28.0" fill="#03e08d"/>
<rect x="2004.12" y="177.9" width="4.6" height="5.1" fill="#03e08d"/>
<rect x="2011.64" y="174.0" width="1.6" height="19.7" fill="#fb4f5d"/>
<rect x="2010.14" y="177.9" width="4.6" height="12.1" fill="#fb4f5d"/>
<rect x="2017.66" y="178.0" width="1.6" height="31.5" fill="#03e08d"/>
<rect x="2016.16" y="185.0" width="4.6" height="5.0" fill="#03e08d"/>
<rect x="2023.68" y="174.0" width="1.6" height="68.4" fill="#fb4f5d"/>
<rect x="2022.18" y="185.0" width="4.6" height="39.5" fill="#fb4f5d"/>
<rect x="2029.70" y="215.0" width="1.6" height="27.4" fill="#fb4f5d"/>
<rect x="2028.20" y="223.0" width="4.6" height="10.8" fill="#fb4f5d"/>
<path d="M70.0,855.6 C71.0,855.4 74.0,854.4 76.0,854.1 C78.0,853.7 80.0,853.7 82.0,853.5 C84.0,853.3 86.1,853.0 88.1,852.8 C90.1,852.6 92.1,852.3 94.1,852.1 C96.1,851.8 98.1,851.6 100.1,851.4 C102.1,851.1 104.1,850.9 106.1,850.6 C108.1,850.4 110.1,850.2 112.1,849.9 C114.1,849.7 116.2,849.4 118.2,849.2 C120.2,849.0 122.2,848.7 124.2,848.5 C126.2,848.2 128.2,848.0 130.2,847.8 C132.2,847.6 134.2,847.3 136.2,847.1 C138.2,846.9 140.2,846.7 142.2,846.5 C144.2,846.2 146.3,846.0 148.3,845.8 C150.3,845.6 152.3,845.4 154.3,845.2 C156.3,845.0 158.3,844.8 160.3,844.6 C162.3,844.4 164.3,844.2 166.3,844.0 C168.3,843.8 170.3,843.6 172.3,843.4 C174.3,843.2 176.4,843.0 178.4,842.8 C180.4,842.6 182.4,842.4 184.4,842.2 C186.4,842.0 188.4,841.8 190.4,841.6 C192.4,841.4 194.4,841.2 196.4,841.0 C198.4,840.8 200.4,840.6 202.4,840.4 C204.4,840.1 206.5,839.9 208.5,839.7 C210.5,839.4 212.5,839.2 214.5,838.9 C216.5,838.6 218.5,838.3 220.5,838.0 C222.5,837.7 224.5,837.4 226.5,837.0 C228.5,836.7 230.5,836.4 232.5,836.0 C234.5,835.7 236.6,835.3 238.6,835.0 C240.6,834.7 242.6,834.3 244.6,834.0 C246.6,833.6 248.6,833.3 250.6,833.0 C252.6,832.6 254.6,832.3 256.6,832.0 C258.6,831.6 260.6,831.3 262.6,831.0 C264.6,830.6 266.7,830.3 268.7,830.0 C270.7,829.7 272.7,829.3 274.7,829.0 C276.7,828.6 278.7,828.3 280.7,827.9 C282.7,827.5 284.7,827.1 286.7,826.7 C288.7,826.3 290.7,825.8 292.7,825.3 C294.7,824.9 296.8,824.4 298.8,823.9 C300.8,823.3 302.8,822.8 304.8,822.3 C306.8,821.8 308.8,821.2 310.8,820.7 C312.8,820.2 314.8,819.7 316.8,819.1 C318.8,818.6 320.8,818.1 322.8,817.6 C324.8,817.1 326.9,816.6 328.9,816.1 C330.9,815.6 332.9,815.1 334.9,814.5 C336.9,814.0 338.9,813.5 340.9,813.0 C342.9,812.5 344.9,812.0 346.9,811.5 C348.9,811.0 350.9,810.5 352.9,810.0 C354.9,809.5 357.0,809.0 359.0,808.5 C361.0,808.0 363.0,807.5 365.0,807.0 C367.0,806.5 369.0,806.0 371.0,805.5 C373.0,805.0 375.0,804.5 377.0,804.0 C379.0,803.5 381.0,803.0 383.0,802.4 C385.0,801.9 387.1,801.4 389.1,800.8 C391.1,800.2 393.1,799.6 395.1,798.9 C397.1,798.2 399.1,797.5 401.1,796.7 C403.1,796.0 405.1,795.1 407.1,794.3 C409.1,793.5 411.1,792.6 413.1,791.7 C415.1,790.8 417.2,790.0 419.2,789.1 C421.2,788.2 423.2,787.3 425.2,786.4 C427.2,785.5 429.2,784.7 431.2,783.8 C433.2,782.9 435.2,782.0 437.2,781.1 C439.2,780.2 441.2,779.3 443.2,778.4 C445.2,777.5 447.3,776.6 449.3,775.7 C451.3,774.8 453.3,773.9 455.3,773.0 C457.3,772.1 459.3,771.2 461.3,770.3 C463.3,769.4 465.3,768.5 467.3,767.6 C469.3,766.7 471.3,765.8 473.3,764.9 C475.3,764.0 477.4,763.1 479.4,762.2 C481.4,761.3 483.4,760.4 485.4,759.5 C487.4,758.6 489.4,757.7 491.4,756.8 C493.4,755.9 495.4,755.0 497.4,754.1 C499.4,753.2 501.4,752.3 503.4,751.4 C505.4,750.5 507.5,749.6 509.5,748.8 C511.5,747.9 513.5,747.1 515.5,746.3 C517.5,745.5 519.5,744.7 521.5,743.9 C523.5,743.1 525.5,742.4 527.5,741.6 C529.5,740.9 531.5,740.2 533.5,739.4 C535.5,738.7 537.6,737.9 539.6,737.1 C541.6,736.4 543.6,735.6 545.6,734.8 C547.6,734.0 549.6,733.2 551.6,732.4 C553.6,731.6 555.6,730.8 557.6,730.0 C559.6,729.2 561.6,728.4 563.6,727.6 C565.6,726.8 567.7,726.0 569.7,725.2 C571.7,724.4 573.7,723.6 575.7,722.8 C577.7,722.0 579.7,721.2 581.7,720.4 C583.7,719.6 585.7,718.9 587.7,718.1 C589.7,717.3 591.7,716.6 593.7,715.9 C595.7,715.2 597.8,714.5 599.8,713.8 C601.8,713.1 603.8,712.5 605.8,711.8 C607.8,711.1 609.8,710.5 611.8,709.8 C613.8,709.1 615.8,708.4 617.8,707.7 C619.8,706.9 621.8,706.2 623.8,705.4 C625.8,704.7 627.9,703.9 629.9,703.2 C631.9,702.4 633.9,701.7 635.9,700.9 C637.9,700.2 639.9,699.5 641.9,698.8 C643.9,698.1 645.9,697.4 647.9,696.8 C649.9,696.1 651.9,695.5 653.9,694.9 C655.9,694.4 658.0,693.9 660.0,693.4 C662.0,692.8 664.0,692.4 666.0,691.9 C668.0,691.4 670.0,691.0 672.0,690.5 C674.0,690.0 676.0,689.5 678.0,688.9 C680.0,688.4 682.0,687.8 684.0,687.3 C686.0,686.7 688.1,686.2 690.1,685.6 C692.1,685.0 694.1,684.5 696.1,683.9 C698.1,683.3 700.1,682.8 702.1,682.2 C704.1,681.7 706.1,681.2 708.1,680.7 C710.1,680.1 712.1,679.6 714.1,679.2 C716.1,678.7 718.2,678.2 720.2,677.8 C722.2,677.4 724.2,677.0 726.2,676.6 C728.2,676.2 730.2,675.8 732.2,675.5 C734.2,675.1 736.2,674.8 738.2,674.4 C740.2,674.1 742.2,673.8 744.2,673.4 C746.2,673.1 748.3,672.7 750.3,672.4 C752.3,672.1 754.3,671.7 756.3,671.4 C758.3,671.1 760.3,670.7 762.3,670.4 C764.3,670.1 766.3,669.7 768.3,669.4 C770.3,669.0 772.3,668.6 774.3,668.3 C776.3,667.9 778.4,667.5 780.4,667.2 C782.4,666.8 784.4,666.4 786.4,666.0 C788.4,665.6 790.4,665.2 792.4,664.8 C794.4,664.4 796.4,664.0 798.4,663.6 C800.4,663.2 802.4,662.8 804.4,662.4 C806.4,662.0 808.5,661.6 810.5,661.2 C812.5,660.8 814.5,660.3 816.5,659.9 C818.5,659.5 820.5,659.1 822.5,658.6 C824.5,658.2 826.5,657.7 828.5,657.3 C830.5,656.8 832.5,656.3 834.5,655.9 C836.5,655.4 838.6,654.9 840.6,654.4 C842.6,653.9 844.6,653.4 846.6,652.9 C848.6,652.4 850.6,651.9 852.6,651.4 C854.6,650.9 856.6,650.4 858.6,649.9 C860.6,649.4 862.6,648.9 864.6,648.4 C866.6,647.9 868.7,647.4 870.7,647.0 C872.7,646.5 874.7,646.1 876.7,645.6 C878.7,645.2 880.7,644.8 882.7,644.3 C884.7,643.9 886.7,643.5 888.7,643.2 C890.7,642.8 892.7,642.4 894.7,642.0 C896.7,641.6 898.8,641.3 900.8,640.9 C902.8,640.5 904.8,640.1 906.8,639.7 C908.8,639.4 910.8,639.0 912.8,638.6 C914.8,638.2 916.8,637.9 918.8,637.5 C920.8,637.1 922.8,636.7 924.8,636.4 C926.8,636.0 928.9,635.6 930.9,635.2 C932.9,634.9 934.9,634.5 936.9,634.1 C938.9,633.7 940.9,633.3 942.9,633.0 C944.9,632.6 946.9,632.2 948.9,631.8 C950.9,631.4 952.9,631.0 954.9,630.6 C956.9,630.2 959.0,629.8 961.0,629.4 C963.0,629.0 965.0,628.6 967.0,628.2 C969.0,627.8 971.0,627.3 973.0,626.9 C975.0,626.5 977.0,626.1 979.0,625.6 C981.0,625.2 983.0,624.8 985.0,624.3 C987.0,623.9 989.1,623.5 991.1,623.1 C993.1,622.6 995.1,622.2 997.1,621.8 C999.1,621.3 1001.1,620.9 1003.1,620.5 C1005.1,620.0 1007.1,619.6 1009.1,619.2 C1011.1,618.8 1013.1,618.3 1015.1,617.9 C1017.1,617.5 1019.2,617.1 1021.2,616.7 C1023.2,616.3 1025.2,615.9 1027.2,615.5 C1029.2,615.1 1031.2,614.8 1033.2,614.4 C1035.2,614.1 1037.2,613.7 1039.2,613.4 C1041.2,613.1 1043.2,612.8 1045.2,612.5 C1047.2,612.2 1049.3,611.9 1051.3,611.6 C1053.3,611.3 1055.3,611.0 1057.3,610.7 C1059.3,610.4 1061.3,610.1 1063.3,609.8 C1065.3,609.5 1067.3,609.2 1069.3,608.9 C1071.3,608.6 1073.3,608.4 1075.3,608.1 C1077.3,607.9 1079.4,607.7 1081.4,607.5 C1083.4,607.3 1085.4,607.1 1087.4,606.9 C1089.4,606.8 1091.4,606.7 1093.4,606.6 C1095.4,606.4 1097.4,606.3 1099.4,606.2 C1101.4,606.1 1103.4,606.0 1105.4,605.9 C1107.4,605.8 1109.5,605.7 1111.5,605.6 C1113.5,605.5 1115.5,605.4 1117.5,605.3 C1119.5,605.2 1121.5,605.1 1123.5,605.0 C1125.5,604.9 1127.5,604.8 1129.5,604.8 C1131.5,604.7 1133.5,604.6 1135.5,604.5 C1137.5,604.4 1139.6,604.4 1141.6,604.3 C1143.6,604.2 1145.6,604.1 1147.6,604.1 C1149.6,604.0 1151.6,603.9 1153.6,603.9 C1155.6,603.8 1157.6,603.7 1159.6,603.7 C1161.6,603.6 1163.6,603.5 1165.6,603.5 C1167.6,603.4 1169.7,603.3 1171.7,603.3 C1173.7,603.2 1175.7,603.1 1177.7,603.1 C1179.7,603.0 1181.7,602.9 1183.7,602.9 C1185.7,602.8 1187.7,602.7 1189.7,602.7 C1191.7,602.6 1193.7,602.5 1195.7,602.4 C1197.7,602.3 1199.8,602.3 1201.8,602.1 C1203.8,602.0 1205.8,601.9 1207.8,601.8 C1209.8,601.6 1211.8,601.4 1213.8,601.2 C1215.8,601.0 1217.8,600.8 1219.8,600.6 C1221.8,600.4 1223.8,600.1 1225.8,599.9 C1227.8,599.6 1229.9,599.4 1231.9,599.2 C1233.9,598.9 1235.9,598.7 1237.9,598.4 C1239.9,598.2 1241.9,597.9 1243.9,597.7 C1245.9,597.4 1247.9,597.2 1249.9,596.9 C1251.9,596.7 1253.9,596.5 1255.9,596.2 C1257.9,596.0 1260.0,595.7 1262.0,595.5 C1264.0,595.2 1266.0,595.0 1268.0,594.7 C1270.0,594.5 1272.0,594.3 1274.0,594.0 C1276.0,593.8 1278.0,593.5 1280.0,593.3 C1282.0,593.0 1284.0,592.8 1286.0,592.5 C1288.0,592.3 1290.1,592.0 1292.1,591.7 C1294.1,591.5 1296.1,591.2 1298.1,590.9 C1300.1,590.6 1302.1,590.3 1304.1,590.1 C1306.1,589.8 1308.1,589.5 1310.1,589.2 C1312.1,588.9 1314.1,588.6 1316.1,588.4 C1318.1,588.2 1320.2,588.0 1322.2,587.9 C1324.2,587.8 1326.2,587.7 1328.2,587.7 C1330.2,587.7 1332.2,587.7 1334.2,587.7 C1336.2,587.8 1338.2,587.8 1340.2,587.9 C1342.2,588.0 1344.2,588.1 1346.2,588.2 C1348.2,588.3 1350.3,588.5 1352.3,588.6 C1354.3,588.7 1356.3,588.9 1358.3,589.0 C1360.3,589.1 1362.3,589.2 1364.3,589.2 C1366.3,589.2 1368.3,589.2 1370.3,589.1 C1372.3,589.0 1374.3,588.9 1376.3,588.8 C1378.3,588.8 1380.4,588.7 1382.4,588.6 C1384.4,588.6 1386.4,588.5 1388.4,588.5 C1390.4,588.5 1392.4,588.5 1394.4,588.6 C1396.4,588.6 1398.4,588.6 1400.4,588.7 C1402.4,588.7 1404.4,588.8 1406.4,588.8 C1408.4,588.9 1410.5,588.9 1412.5,588.9 C1414.5,589.0 1416.5,589.0 1418.5,589.1 C1420.5,589.1 1422.5,589.2 1424.5,589.2 C1426.5,589.2 1428.5,589.3 1430.5,589.3 C1432.5,589.3 1434.5,589.3 1436.5,589.3 C1438.5,589.3 1440.6,589.2 1442.6,589.2 C1444.6,589.1 1446.6,589.0 1448.6,588.9 C1450.6,588.8 1452.6,588.6 1454.6,588.5 C1456.6,588.3 1458.6,588.2 1460.6,588.0 C1462.6,587.9 1464.6,587.7 1466.6,587.6 C1468.6,587.5 1470.7,587.4 1472.7,587.3 C1474.7,587.2 1476.7,587.2 1478.7,587.2 C1480.7,587.2 1482.7,587.2 1484.7,587.2 C1486.7,587.3 1488.7,587.4 1490.7,587.4 C1492.7,587.5 1494.7,587.6 1496.7,587.7 C1498.7,587.8 1500.8,587.8 1502.8,587.9 C1504.8,588.0 1506.8,588.1 1508.8,588.2 C1510.8,588.3 1512.8,588.4 1514.8,588.5 C1516.8,588.6 1518.8,588.7 1520.8,588.8 C1522.8,588.9 1524.8,589.0 1526.8,589.1 C1528.8,589.2 1530.9,589.3 1532.9,589.4 C1534.9,589.5 1536.9,589.6 1538.9,589.7 C1540.9,589.8 1542.9,589.9 1544.9,589.9 C1546.9,590.0 1548.9,590.0 1550.9,590.1 C1552.9,590.1 1554.9,590.2 1556.9,590.2 C1558.9,590.2 1561.0,590.2 1563.0,590.2 C1565.0,590.2 1567.0,590.2 1569.0,590.2 C1571.0,590.2 1573.0,590.2 1575.0,590.1 C1577.0,590.1 1579.0,590.1 1581.0,590.1 C1583.0,590.1 1585.0,590.1 1587.0,590.1 C1589.0,590.1 1591.1,590.0 1593.1,590.0 C1595.1,590.0 1597.1,590.0 1599.1,590.0 C1601.1,590.0 1603.1,590.0 1605.1,590.0 C1607.1,590.0 1609.1,589.9 1611.1,589.9 C1613.1,589.9 1615.1,589.9 1617.1,589.9 C1619.1,589.9 1621.2,589.9 1623.2,589.8 C1625.2,589.8 1627.2,589.7 1629.2,589.7 C1631.2,589.6 1633.2,589.5 1635.2,589.4 C1637.2,589.3 1639.2,589.2 1641.2,589.0 C1643.2,588.8 1645.2,588.7 1647.2,588.5 C1649.2,588.3 1651.3,588.0 1653.3,587.8 C1655.3,587.6 1657.3,587.4 1659.3,587.2 C1661.3,586.9 1663.3,586.7 1665.3,586.5 C1667.3,586.3 1669.3,586.0 1671.3,585.8 C1673.3,585.6 1675.3,585.5 1677.3,585.3 C1679.3,585.2 1681.4,585.1 1683.4,585.0 C1685.4,584.9 1687.4,584.8 1689.4,584.8 C1691.4,584.7 1693.4,584.7 1695.4,584.7 C1697.4,584.7 1699.4,584.7 1701.4,584.6 C1703.4,584.6 1705.4,584.6 1707.4,584.5 C1709.4,584.4 1711.5,584.3 1713.5,584.2 C1715.5,584.0 1717.5,583.8 1719.5,583.7 C1721.5,583.5 1723.5,583.2 1725.5,583.0 C1727.5,582.8 1729.5,582.7 1731.5,582.5 C1733.5,582.4 1735.5,582.3 1737.5,582.3 C1739.5,582.2 1741.6,582.2 1743.6,582.2 C1745.6,582.1 1747.6,582.1 1749.6,582.1 C1751.6,582.0 1753.6,582.0 1755.6,581.9 C1757.6,581.8 1759.6,581.7 1761.6,581.5 C1763.6,581.4 1765.6,581.2 1767.6,581.0 C1769.6,580.8 1771.7,580.5 1773.7,580.3 C1775.7,580.0 1777.7,579.7 1779.7,579.5 C1781.7,579.2 1783.7,578.9 1785.7,578.6 C1787.7,578.3 1789.7,578.1 1791.7,577.8 C1793.7,577.5 1795.7,577.2 1797.7,577.0 C1799.7,576.7 1801.8,576.4 1803.8,576.2 C1805.8,575.9 1807.8,575.7 1809.8,575.4 C1811.8,575.2 1813.8,574.9 1815.8,574.7 C1817.8,574.4 1819.8,574.2 1821.8,573.9 C1823.8,573.7 1825.8,573.4 1827.8,573.2 C1829.8,573.0 1831.9,572.7 1833.9,572.5 C1835.9,572.2 1837.9,572.0 1839.9,571.8 C1841.9,571.5 1843.9,571.3 1845.9,571.0 C1847.9,570.8 1849.9,570.6 1851.9,570.3 C1853.9,570.1 1855.9,569.8 1857.9,569.6 C1859.9,569.4 1862.0,569.1 1864.0,568.9 C1866.0,568.6 1868.0,568.4 1870.0,568.1 C1872.0,567.9 1874.0,567.7 1876.0,567.4 C1878.0,567.2 1880.0,566.9 1882.0,566.7 C1884.0,566.4 1886.0,566.1 1888.0,565.8 C1890.0,565.5 1892.1,565.2 1894.1,564.9 C1896.1,564.6 1898.1,564.2 1900.1,563.8 C1902.1,563.4 1904.1,563.0 1906.1,562.6 C1908.1,562.2 1910.1,561.7 1912.1,561.3 C1914.1,560.8 1916.1,560.4 1918.1,559.9 C1920.1,559.4 1922.2,558.9 1924.2,558.3 C1926.2,557.7 1928.2,557.1 1930.2,556.4 C1932.2,555.7 1934.2,554.9 1936.2,554.0 C1938.2,553.2 1940.2,552.3 1942.2,551.4 C1944.2,550.5 1946.2,549.6 1948.2,548.6 C1950.2,547.7 1952.3,546.7 1954.3,545.8 C1956.3,544.8 1958.3,543.9 1960.3,543.0 C1962.3,542.0 1964.3,541.1 1966.3,540.2 C1968.3,539.3 1970.3,538.4 1972.3,537.5 C1974.3,536.7 1976.3,535.8 1978.3,534.9 C1980.3,534.0 1982.4,533.2 1984.4,532.3 C1986.4,531.4 1988.4,530.4 1990.4,529.5 C1992.4,528.5 1994.4,527.6 1996.4,526.5 C1998.4,525.5 2000.4,524.5 2002.4,523.4 C2004.4,522.4 2006.4,521.3 2008.4,520.3 C2010.4,519.2 2012.5,518.1 2014.5,517.2 C2016.5,516.2 2018.5,515.3 2020.5,514.6 C2022.5,513.8 2025.0,513.5 2026.5,512.6 C2028.0,511.8 2028.8,510.1 2029.2,509.6" fill="none" stroke="#a070f2" stroke-width="3.4" stroke-linejoin="round" stroke-linecap="round"/>
<path d="M72.4,781.9 C73.4,781.6 76.4,780.7 78.4,780.1 C80.4,779.5 82.5,779.0 84.5,778.4 C86.5,777.8 88.5,777.2 90.5,776.5 C92.5,775.9 94.5,775.3 96.5,774.6 C98.5,774.0 100.5,773.2 102.5,772.6 C104.5,772.0 106.5,771.3 108.5,770.9 C110.5,770.5 112.6,770.2 114.6,770.0 C116.6,769.9 118.6,769.9 120.6,769.9 C122.6,769.8 124.6,769.8 126.6,769.8 C128.6,769.8 130.6,769.8 132.6,769.8 C134.6,769.8 136.6,769.8 138.6,769.8 C140.6,769.8 142.7,769.8 144.7,769.8 C146.7,769.8 148.7,769.8 150.7,769.8 C152.7,769.8 154.7,769.8 156.7,769.9 C158.7,769.9 160.7,769.9 162.7,770.0 C164.7,770.1 166.7,770.3 168.7,770.6 C170.7,770.9 172.8,771.4 174.8,771.8 C176.8,772.2 178.8,772.8 180.8,773.1 C182.8,773.4 184.8,773.6 186.8,773.7 C188.8,773.8 190.8,773.8 192.8,773.9 C194.8,773.9 196.8,773.9 198.8,773.9 C200.8,773.9 202.9,773.9 204.9,773.8 C206.9,773.8 208.9,773.8 210.9,773.6 C212.9,773.4 214.9,773.0 216.9,772.7 C218.9,772.5 220.9,772.1 222.9,771.8 C224.9,771.6 226.9,771.6 228.9,771.5 C230.9,771.3 233.0,771.3 235.0,771.1 C237.0,770.9 239.0,770.5 241.0,770.2 C243.0,769.9 245.0,769.6 247.0,769.4 C249.0,769.2 251.0,769.1 253.0,769.0 C255.0,769.0 257.0,769.0 259.0,768.9 C261.0,768.7 263.1,768.5 265.1,768.3 C267.1,768.1 269.1,767.8 271.1,767.6 C273.1,767.3 275.1,767.2 277.1,766.8 C279.1,766.4 281.1,765.9 283.1,765.2 C285.1,764.5 287.1,763.5 289.1,762.5 C291.1,761.6 293.2,760.6 295.2,759.5 C297.2,758.5 299.2,757.5 301.2,756.4 C303.2,755.4 305.2,754.3 307.2,753.2 C309.2,752.2 311.2,751.1 313.2,750.0 C315.2,748.9 317.2,747.8 319.2,746.8 C321.2,745.7 323.3,744.7 325.3,743.7 C327.3,742.7 329.3,741.8 331.3,740.8 C333.3,739.9 335.3,738.9 337.3,738.0 C339.3,737.1 341.3,736.1 343.3,735.2 C345.3,734.3 347.3,733.4 349.3,732.6 C351.3,731.8 353.4,731.1 355.4,730.4 C357.4,729.7 359.4,729.1 361.4,728.4 C363.4,727.7 365.4,727.0 367.4,726.1 C369.4,725.3 371.4,724.3 373.4,723.4 C375.4,722.4 377.4,721.4 379.4,720.3 C381.4,719.2 383.5,718.1 385.5,716.8 C387.5,715.5 389.5,714.1 391.5,712.6 C393.5,711.0 395.5,709.2 397.5,707.4 C399.5,705.6 401.5,703.7 403.5,701.8 C405.5,699.9 407.5,698.1 409.5,696.3 C411.5,694.5 413.6,692.8 415.6,691.0 C417.6,689.1 419.6,687.3 421.6,685.3 C423.6,683.3 425.6,681.1 427.6,679.0 C429.6,676.9 431.6,674.8 433.6,672.6 C435.6,670.5 437.6,668.4 439.6,666.2 C441.6,664.0 443.7,661.8 445.7,659.6 C447.7,657.3 449.7,654.9 451.7,652.5 C453.7,650.1 455.7,647.6 457.7,645.1 C459.7,642.7 461.7,640.1 463.7,637.7 C465.7,635.3 467.7,632.9 469.7,630.6 C471.7,628.4 473.8,626.4 475.8,624.4 C477.8,622.4 479.8,620.5 481.8,618.6 C483.8,616.7 485.8,614.8 487.8,613.1 C489.8,611.3 491.8,609.7 493.8,608.2 C495.8,606.7 497.8,605.2 499.8,603.9 C501.8,602.5 503.9,601.2 505.9,600.1 C507.9,598.9 509.9,598.0 511.9,597.1 C513.9,596.3 515.9,595.6 517.9,594.8 C519.9,594.1 521.9,593.4 523.9,592.7 C525.9,592.0 527.9,591.3 529.9,590.6 C531.9,589.8 534.0,589.0 536.0,588.1 C538.0,587.2 540.0,586.1 542.0,584.9 C544.0,583.8 546.0,582.5 548.0,581.2 C550.0,579.9 552.0,578.6 554.0,577.3 C556.0,576.1 558.0,574.8 560.0,573.6 C562.0,572.3 564.1,571.1 566.1,569.9 C568.1,568.6 570.1,567.4 572.1,566.2 C574.1,565.0 576.1,563.8 578.1,562.6 C580.1,561.4 582.1,560.2 584.1,559.1 C586.1,558.0 588.1,556.9 590.1,556.1 C592.1,555.3 594.2,554.8 596.2,554.2 C598.2,553.7 600.2,553.4 602.2,553.0 C604.2,552.5 606.2,552.0 608.2,551.5 C610.2,551.0 612.2,550.4 614.2,549.8 C616.2,549.1 618.2,548.3 620.2,547.4 C622.2,546.6 624.3,545.6 626.3,544.6 C628.3,543.7 630.3,542.6 632.3,541.8 C634.3,540.9 636.3,540.1 638.3,539.3 C640.3,538.6 642.3,537.9 644.3,537.2 C646.3,536.6 648.3,535.7 650.3,535.2 C652.3,534.6 654.4,534.1 656.4,533.9 C658.4,533.6 660.4,533.7 662.4,533.7 C664.4,533.8 666.4,533.9 668.4,534.1 C670.4,534.3 672.4,534.6 674.4,534.9 C676.4,535.2 678.4,535.6 680.4,536.0 C682.4,536.3 684.5,536.7 686.5,536.9 C688.5,537.2 690.5,537.4 692.5,537.5 C694.5,537.6 696.5,537.6 698.5,537.7 C700.5,537.7 702.5,537.7 704.5,537.6 C706.5,537.6 708.5,537.5 710.5,537.4 C712.5,537.2 714.6,536.8 716.6,536.6 C718.6,536.4 720.6,536.1 722.6,535.9 C724.6,535.7 726.6,535.6 728.6,535.5 C730.6,535.4 732.6,535.3 734.6,535.3 C736.6,535.3 738.6,535.2 740.6,535.3 C742.6,535.4 744.7,535.6 746.7,535.8 C748.7,536.1 750.7,536.4 752.7,536.7 C754.7,537.0 756.7,537.4 758.7,537.7 C760.7,538.1 762.7,538.4 764.7,538.9 C766.7,539.5 768.7,540.1 770.7,540.9 C772.7,541.6 774.8,542.6 776.8,543.3 C778.8,543.9 780.8,544.3 782.8,544.5 C784.8,544.8 786.8,544.8 788.8,544.8 C790.8,544.9 792.8,544.8 794.8,544.8 C796.8,544.8 798.8,544.8 800.8,544.8 C802.8,544.8 804.9,544.8 806.9,544.9 C808.9,544.9 810.9,544.9 812.9,545.0 C814.9,545.2 816.9,545.4 818.9,545.7 C820.9,546.1 822.9,546.5 824.9,546.9 C826.9,547.4 828.9,547.9 830.9,548.3 C832.9,548.7 835.0,549.1 837.0,549.4 C839.0,549.6 841.0,549.7 843.0,549.7 C845.0,549.7 847.0,549.6 849.0,549.4 C851.0,549.2 853.0,548.9 855.0,548.5 C857.0,548.2 859.0,547.8 861.0,547.4 C863.0,547.1 865.1,546.7 867.1,546.3 C869.1,545.9 871.1,545.6 873.1,545.3 C875.1,544.9 877.1,544.6 879.1,544.2 C881.1,543.7 883.1,543.1 885.1,542.5 C887.1,541.9 889.1,541.2 891.1,540.5 C893.1,539.8 895.2,539.2 897.2,538.6 C899.2,537.9 901.2,537.3 903.2,536.7 C905.2,536.1 907.2,535.5 909.2,534.9 C911.2,534.3 913.2,533.6 915.2,533.0 C917.2,532.4 919.2,531.7 921.2,531.1 C923.2,530.4 925.3,529.7 927.3,529.1 C929.3,528.5 931.3,527.9 933.3,527.4 C935.3,527.0 937.3,526.6 939.3,526.2 C941.3,525.9 943.3,525.6 945.3,525.3 C947.3,525.0 949.3,524.8 951.3,524.5 C953.3,524.1 955.4,523.9 957.4,523.5 C959.4,523.2 961.4,522.8 963.4,522.4 C965.4,522.0 967.4,521.6 969.4,521.1 C971.4,520.7 973.4,520.3 975.4,519.8 C977.4,519.4 979.4,518.9 981.4,518.4 C983.4,517.9 985.5,517.3 987.5,516.8 C989.5,516.2 991.5,515.7 993.5,515.1 C995.5,514.6 997.5,514.1 999.5,513.6 C1001.5,513.1 1003.5,512.7 1005.5,512.2 C1007.5,511.8 1009.5,511.5 1011.5,511.1 C1013.5,510.7 1015.6,510.3 1017.6,510.0 C1019.6,509.8 1021.6,509.5 1023.6,509.4 C1025.6,509.2 1027.6,509.3 1029.6,509.4 C1031.6,509.4 1033.6,509.5 1035.6,509.7 C1037.6,509.8 1039.6,509.9 1041.6,510.0 C1043.6,510.1 1045.7,510.2 1047.7,510.3 C1049.7,510.4 1051.7,510.5 1053.7,510.7 C1055.7,510.8 1057.7,511.0 1059.7,511.2 C1061.7,511.4 1063.7,511.7 1065.7,512.0 C1067.7,512.2 1069.7,512.5 1071.7,512.8 C1073.7,513.1 1075.8,513.4 1077.8,513.7 C1079.8,514.0 1081.8,514.3 1083.8,514.7 C1085.8,515.2 1087.8,515.7 1089.8,516.3 C1091.8,516.9 1093.8,517.7 1095.8,518.4 C1097.8,519.1 1099.8,519.8 1101.8,520.5 C1103.8,521.2 1105.9,522.0 1107.9,522.6 C1109.9,523.3 1111.9,523.9 1113.9,524.4 C1115.9,525.0 1117.9,525.6 1119.9,526.2 C1121.9,526.8 1123.9,527.3 1125.9,527.9 C1127.9,528.5 1129.9,529.0 1131.9,529.5 C1133.9,530.1 1136.0,530.5 1138.0,531.0 C1140.0,531.4 1142.0,531.8 1144.0,532.2 C1146.0,532.7 1148.0,533.1 1150.0,533.7 C1152.0,534.2 1154.0,535.0 1156.0,535.7 C1158.0,536.4 1160.0,537.3 1162.0,538.2 C1164.0,539.0 1166.1,539.9 1168.1,540.9 C1170.1,541.9 1172.1,543.1 1174.1,544.2 C1176.1,545.2 1178.1,546.4 1180.1,547.3 C1182.1,548.3 1184.1,549.2 1186.1,550.0 C1188.1,550.8 1190.1,551.5 1192.1,552.2 C1194.1,552.9 1196.2,553.5 1198.2,554.2 C1200.2,554.8 1202.2,555.4 1204.2,556.0 C1206.2,556.7 1208.2,557.3 1210.2,557.9 C1212.2,558.4 1214.2,558.9 1216.2,559.2 C1218.2,559.4 1220.2,559.4 1222.2,559.3 C1224.2,559.1 1226.3,558.8 1228.3,558.4 C1230.3,558.1 1232.3,557.7 1234.3,557.4 C1236.3,557.0 1238.3,556.6 1240.3,556.1 C1242.3,555.7 1244.3,555.2 1246.3,554.6 C1248.3,554.1 1250.3,553.5 1252.3,552.9 C1254.3,552.3 1256.4,551.7 1258.4,551.1 C1260.4,550.5 1262.4,549.9 1264.4,549.4 C1266.4,548.8 1268.4,548.2 1270.4,547.6 C1272.4,547.0 1274.4,546.4 1276.4,545.9 C1278.4,545.3 1280.4,544.8 1282.4,544.3 C1284.4,543.7 1286.5,543.2 1288.5,542.7 C1290.5,542.2 1292.5,541.7 1294.5,541.2 C1296.5,540.7 1298.5,540.2 1300.5,539.7 C1302.5,539.2 1304.5,538.7 1306.5,538.3 C1308.5,537.8 1310.5,537.4 1312.5,537.2 C1314.5,537.0 1316.6,537.1 1318.6,537.2 C1320.6,537.3 1322.6,537.5 1324.6,537.8 C1326.6,538.1 1328.6,538.5 1330.6,539.1 C1332.6,539.7 1334.6,540.4 1336.6,541.1 C1338.6,541.9 1340.6,542.6 1342.6,543.5 C1344.6,544.4 1346.7,545.4 1348.7,546.4 C1350.7,547.5 1352.7,548.7 1354.7,549.6 C1356.7,550.6 1358.7,551.5 1360.7,552.2 C1362.7,552.9 1364.7,553.2 1366.7,553.7 C1368.7,554.1 1370.7,554.3 1372.7,554.7 C1374.7,555.0 1376.8,555.3 1378.8,555.7 C1380.8,556.0 1382.8,556.3 1384.8,556.7 C1386.8,557.0 1388.8,557.3 1390.8,557.7 C1392.8,558.1 1394.8,558.5 1396.8,558.9 C1398.8,559.3 1400.8,559.8 1402.8,560.2 C1404.8,560.7 1406.9,561.1 1408.9,561.5 C1410.9,562.0 1412.9,562.4 1414.9,562.8 C1416.9,563.2 1418.9,563.6 1420.9,564.0 C1422.9,564.3 1424.9,564.6 1426.9,564.9 C1428.9,565.3 1430.9,565.6 1432.9,565.8 C1434.9,566.1 1437.0,566.4 1439.0,566.6 C1441.0,566.9 1443.0,567.1 1445.0,567.2 C1447.0,567.3 1449.0,567.3 1451.0,567.3 C1453.0,567.3 1455.0,567.2 1457.0,567.0 C1459.0,566.8 1461.0,566.4 1463.0,566.0 C1465.0,565.7 1467.1,565.2 1469.1,564.9 C1471.1,564.6 1473.1,564.4 1475.1,564.4 C1477.1,564.3 1479.1,564.5 1481.1,564.6 C1483.1,564.8 1485.1,565.0 1487.1,565.3 C1489.1,565.5 1491.1,565.8 1493.1,566.1 C1495.1,566.5 1497.2,566.9 1499.2,567.4 C1501.2,567.8 1503.2,568.4 1505.2,568.8 C1507.2,569.3 1509.2,569.7 1511.2,570.1 C1513.2,570.4 1515.2,570.7 1517.2,570.9 C1519.2,571.2 1521.2,571.3 1523.2,571.6 C1525.2,571.9 1527.3,572.2 1529.3,572.8 C1531.3,573.3 1533.3,574.1 1535.3,575.0 C1537.3,575.8 1539.3,576.9 1541.3,577.9 C1543.3,578.8 1545.3,579.9 1547.3,580.7 C1549.3,581.5 1551.3,582.2 1553.3,582.8 C1555.3,583.4 1557.4,583.7 1559.4,584.1 C1561.4,584.5 1563.4,584.8 1565.4,585.1 C1567.4,585.4 1569.4,585.6 1571.4,585.8 C1573.4,586.0 1575.4,586.2 1577.4,586.3 C1579.4,586.4 1581.4,586.4 1583.4,586.4 C1585.4,586.4 1587.5,586.4 1589.5,586.4 C1591.5,586.4 1593.5,586.4 1595.5,586.4 C1597.5,586.4 1599.5,586.4 1601.5,586.4 C1603.5,586.4 1605.5,586.4 1607.5,586.3 C1609.5,586.3 1611.5,586.2 1613.5,586.0 C1615.5,585.8 1617.6,585.4 1619.6,585.0 C1621.6,584.7 1623.6,584.2 1625.6,583.8 C1627.6,583.4 1629.6,583.0 1631.6,582.6 C1633.6,582.2 1635.6,581.8 1637.6,581.3 C1639.6,580.9 1641.6,580.5 1643.6,580.0 C1645.6,579.5 1647.7,579.0 1649.7,578.5 C1651.7,578.0 1653.7,577.5 1655.7,577.0 C1657.7,576.5 1659.7,576.0 1661.7,575.5 C1663.7,575.0 1665.7,574.6 1667.7,574.0 C1669.7,573.4 1671.7,572.8 1673.7,572.2 C1675.7,571.5 1677.8,570.6 1679.8,570.1 C1681.8,569.5 1683.8,569.2 1685.8,568.9 C1687.8,568.7 1689.8,568.8 1691.8,568.8 C1693.8,568.8 1695.8,568.8 1697.8,568.9 C1699.8,568.9 1701.8,569.0 1703.8,569.0 C1705.8,569.0 1707.9,569.1 1709.9,569.1 C1711.9,569.2 1713.9,569.2 1715.9,569.2 C1717.9,569.2 1719.9,569.1 1721.9,569.0 C1723.9,568.8 1725.9,568.6 1727.9,568.4 C1729.9,568.1 1731.9,567.8 1733.9,567.6 C1735.9,567.5 1738.0,567.3 1740.0,567.3 C1742.0,567.3 1744.0,567.7 1746.0,567.7 C1748.0,567.7 1750.0,567.7 1752.0,567.5 C1754.0,567.4 1756.0,567.0 1758.0,566.7 C1760.0,566.4 1762.0,566.1 1764.0,565.7 C1766.0,565.3 1768.1,565.0 1770.1,564.4 C1772.1,563.9 1774.1,563.2 1776.1,562.5 C1778.1,561.8 1780.1,560.9 1782.1,560.1 C1784.1,559.3 1786.1,558.5 1788.1,557.7 C1790.1,556.9 1792.1,556.0 1794.1,555.2 C1796.1,554.4 1798.2,553.6 1800.2,552.8 C1802.2,552.1 1804.2,551.3 1806.2,550.7 C1808.2,550.0 1810.2,549.5 1812.2,548.9 C1814.2,548.3 1816.2,547.8 1818.2,547.3 C1820.2,546.7 1822.2,546.2 1824.2,545.7 C1826.2,545.1 1828.3,544.6 1830.3,544.1 C1832.3,543.5 1834.3,543.0 1836.3,542.5 C1838.3,541.9 1840.3,541.4 1842.3,540.9 C1844.3,540.3 1846.3,539.8 1848.3,539.2 C1850.3,538.7 1852.3,538.2 1854.3,537.5 C1856.3,536.9 1858.4,536.2 1860.4,535.3 C1862.4,534.5 1864.4,533.5 1866.4,532.6 C1868.4,531.6 1870.4,530.6 1872.4,529.7 C1874.4,528.7 1876.4,527.8 1878.4,527.1 C1880.4,526.3 1882.4,525.8 1884.4,525.3 C1886.4,524.8 1888.5,524.5 1890.5,523.9 C1892.5,523.3 1894.5,522.7 1896.5,521.8 C1898.5,520.9 1900.5,519.7 1902.5,518.5 C1904.5,517.3 1906.5,516.0 1908.5,514.7 C1910.5,513.5 1912.5,512.2 1914.5,511.0 C1916.5,509.8 1918.6,508.7 1920.6,507.4 C1922.6,506.0 1924.6,504.8 1926.6,503.0 C1928.6,501.2 1930.6,499.1 1932.6,496.8 C1934.6,494.6 1936.6,492.0 1938.6,489.5 C1940.6,487.0 1942.6,484.4 1944.6,481.8 C1946.6,479.2 1948.7,476.5 1950.7,473.9 C1952.7,471.2 1954.7,468.5 1956.7,465.9 C1958.7,463.2 1960.7,460.6 1962.7,458.0 C1964.7,455.4 1966.7,452.8 1968.7,450.3 C1970.7,447.8 1972.7,445.4 1974.7,443.0 C1976.7,440.5 1978.8,438.2 1980.8,435.7 C1982.8,433.2 1984.8,430.7 1986.8,428.0 C1988.8,425.2 1990.8,422.3 1992.8,419.4 C1994.8,416.5 1996.8,413.5 1998.8,410.7 C2000.8,407.9 2002.8,405.2 2004.8,402.5 C2006.8,399.9 2008.9,397.2 2010.9,394.8 C2012.9,392.4 2014.9,390.1 2016.9,388.0 C2018.9,385.8 2020.9,384.0 2022.9,382.0 C2024.9,380.0 2027.9,376.7 2028.9,375.7" fill="none" stroke="#f7f37a" stroke-width="3.4" stroke-linejoin="round" stroke-linecap="round"/>
<path d="M72.4,742.4 C73.4,742.3 76.4,742.1 78.4,741.7 C80.4,741.3 82.5,740.7 84.5,739.9 C86.5,739.2 88.5,738.1 90.5,737.2 C92.5,736.3 94.5,735.3 96.5,734.6 C98.5,733.8 100.5,732.9 102.5,732.6 C104.5,732.2 106.5,732.2 108.5,732.3 C110.5,732.4 112.6,732.8 114.6,733.1 C116.6,733.4 118.6,734.0 120.6,734.3 C122.6,734.6 124.6,734.8 126.6,735.0 C128.6,735.2 130.6,735.1 132.6,735.4 C134.6,735.6 136.6,735.8 138.6,736.3 C140.6,736.7 142.7,737.4 144.7,738.0 C146.7,738.6 148.7,739.3 150.7,740.0 C152.7,740.6 154.7,741.2 156.7,741.8 C158.7,742.4 160.7,742.9 162.7,743.5 C164.7,744.2 166.7,744.8 168.7,745.6 C170.7,746.4 172.8,747.4 174.8,748.4 C176.8,749.4 178.8,750.5 180.8,751.4 C182.8,752.2 184.8,752.8 186.8,753.3 C188.8,753.8 190.8,754.1 192.8,754.3 C194.8,754.5 196.8,754.5 198.8,754.7 C200.8,754.8 202.9,755.1 204.9,755.3 C206.9,755.4 208.9,755.8 210.9,755.8 C212.9,755.8 214.9,755.4 216.9,755.3 C218.9,755.1 220.9,754.8 222.9,754.7 C224.9,754.5 226.9,754.5 228.9,754.5 C230.9,754.5 233.0,754.5 235.0,754.5 C237.0,754.5 239.0,754.5 241.0,754.5 C243.0,754.5 245.0,754.5 247.0,754.5 C249.0,754.5 251.0,754.5 253.0,754.5 C255.0,754.5 257.0,754.5 259.0,754.4 C261.0,754.2 263.1,754.0 265.1,753.6 C267.1,753.2 269.1,752.5 271.1,751.9 C273.1,751.3 275.1,750.7 277.1,749.9 C279.1,749.1 281.1,748.2 283.1,747.1 C285.1,746.0 287.1,744.7 289.1,743.5 C291.1,742.2 293.2,740.9 295.2,739.5 C297.2,738.1 299.2,736.8 301.2,735.3 C303.2,733.8 305.2,732.2 307.2,730.6 C309.2,729.0 311.2,727.4 313.2,725.8 C315.2,724.1 317.2,722.5 319.2,720.7 C321.2,718.9 323.3,716.9 325.3,715.0 C327.3,713.1 329.3,711.0 331.3,709.2 C333.3,707.4 335.3,705.6 337.3,704.2 C339.3,702.7 341.3,701.5 343.3,700.2 C345.3,698.9 347.3,697.8 349.3,696.6 C351.3,695.4 353.4,694.3 355.4,693.2 C357.4,692.2 359.4,691.4 361.4,690.5 C363.4,689.5 365.4,688.7 367.4,687.7 C369.4,686.7 371.4,685.7 373.4,684.6 C375.4,683.4 377.4,682.3 379.4,680.7 C381.4,679.1 383.5,677.4 385.5,675.2 C387.5,673.0 389.5,670.3 391.5,667.5 C393.5,664.7 395.5,661.6 397.5,658.5 C399.5,655.4 401.5,652.3 403.5,649.1 C405.5,646.0 407.5,642.8 409.5,639.6 C411.5,636.5 413.6,633.2 415.6,630.0 C417.6,626.9 419.6,623.7 421.6,620.5 C423.6,617.4 425.6,614.3 427.6,611.2 C429.6,608.1 431.6,605.0 433.6,601.8 C435.6,598.7 437.6,595.6 439.6,592.4 C441.6,589.2 443.7,586.0 445.7,582.9 C447.7,579.7 449.7,576.5 451.7,573.3 C453.7,570.1 455.7,567.0 457.7,563.7 C459.7,560.5 461.7,557.3 463.7,554.0 C465.7,550.7 467.7,547.3 469.7,543.8 C471.7,540.3 473.8,536.5 475.8,533.1 C477.8,529.7 479.8,526.0 481.8,523.2 C483.8,520.5 485.8,518.3 487.8,516.4 C489.8,514.6 491.8,513.5 493.8,512.2 C495.8,510.9 497.8,509.7 499.8,508.5 C501.8,507.3 503.9,506.0 505.9,504.9 C507.9,503.8 509.9,502.8 511.9,502.0 C513.9,501.1 515.9,500.4 517.9,499.8 C519.9,499.1 521.9,498.6 523.9,498.3 C525.9,498.0 527.9,498.2 529.9,498.1 C531.9,498.0 534.0,498.0 536.0,497.5 C538.0,497.0 540.0,496.4 542.0,495.4 C544.0,494.4 546.0,493.0 548.0,491.6 C550.0,490.3 552.0,488.6 554.0,487.2 C556.0,485.8 558.0,484.4 560.0,483.1 C562.0,481.7 564.1,480.5 566.1,479.3 C568.1,478.1 570.1,477.0 572.1,476.0 C574.1,475.0 576.1,474.2 578.1,473.2 C580.1,472.2 582.1,471.1 584.1,470.2 C586.1,469.3 588.1,468.2 590.1,467.7 C592.1,467.2 594.2,467.4 596.2,467.4 C598.2,467.4 600.2,467.6 602.2,467.7 C604.2,467.8 606.2,467.8 608.2,467.8 C610.2,467.7 612.2,467.7 614.2,467.5 C616.2,467.3 618.2,466.8 620.2,466.4 C622.2,466.0 624.3,465.4 626.3,464.9 C628.3,464.3 630.3,463.8 632.3,463.1 C634.3,462.4 636.3,461.3 638.3,460.6 C640.3,459.9 642.3,459.3 644.3,458.8 C646.3,458.4 648.3,457.9 650.3,457.9 C652.3,457.9 654.4,458.1 656.4,458.8 C658.4,459.5 660.4,460.7 662.4,461.9 C664.4,463.0 666.4,464.5 668.4,465.8 C670.4,467.0 672.4,468.2 674.4,469.3 C676.4,470.5 678.4,471.6 680.4,472.8 C682.4,474.0 684.5,475.3 686.5,476.4 C688.5,477.6 690.5,478.9 692.5,479.9 C694.5,480.9 696.5,481.8 698.5,482.6 C700.5,483.4 702.5,483.9 704.5,484.5 C706.5,485.1 708.5,485.6 710.5,486.1 C712.5,486.6 714.6,487.1 716.6,487.5 C718.6,487.9 720.6,488.1 722.6,488.4 C724.6,488.7 726.6,488.9 728.6,489.4 C730.6,489.8 732.6,490.3 734.6,490.9 C736.6,491.5 738.6,492.1 740.6,492.9 C742.6,493.7 744.7,494.6 746.7,495.6 C748.7,496.6 750.7,497.8 752.7,499.0 C754.7,500.1 756.7,501.2 758.7,502.4 C760.7,503.6 762.7,504.6 764.7,506.0 C766.7,507.4 768.7,509.2 770.7,510.8 C772.7,512.4 774.8,514.4 776.8,515.7 C778.8,516.9 780.8,517.7 782.8,518.4 C784.8,519.0 786.8,519.2 788.8,519.6 C790.8,520.1 792.8,520.4 794.8,520.9 C796.8,521.5 798.8,522.0 800.8,522.7 C802.8,523.3 804.9,524.0 806.9,524.7 C808.9,525.4 810.9,526.1 812.9,526.8 C814.9,527.5 816.9,528.3 818.9,529.1 C820.9,529.8 822.9,530.7 824.9,531.4 C826.9,532.2 828.9,533.0 830.9,533.7 C832.9,534.4 835.0,535.1 837.0,535.7 C839.0,536.3 841.0,536.8 843.0,537.3 C845.0,537.7 847.0,538.2 849.0,538.2 C851.0,538.3 853.0,538.0 855.0,537.5 C857.0,537.0 859.0,536.0 861.0,535.2 C863.0,534.5 865.1,533.5 867.1,532.8 C869.1,532.2 871.1,531.8 873.1,531.4 C875.1,530.9 877.1,530.8 879.1,530.2 C881.1,529.6 883.1,528.7 885.1,527.5 C887.1,526.3 889.1,524.5 891.1,523.0 C893.1,521.5 895.2,519.8 897.2,518.6 C899.2,517.4 901.2,516.6 903.2,515.8 C905.2,515.0 907.2,514.5 909.2,513.7 C911.2,513.0 913.2,512.1 915.2,511.2 C917.2,510.3 919.2,509.3 921.2,508.4 C923.2,507.6 925.3,506.8 927.3,506.1 C929.3,505.4 931.3,504.8 933.3,504.2 C935.3,503.7 937.3,503.1 939.3,502.6 C941.3,502.2 943.3,501.8 945.3,501.5 C947.3,501.2 949.3,501.1 951.3,500.8 C953.3,500.6 955.4,500.4 957.4,500.0 C959.4,499.6 961.4,499.1 963.4,498.5 C965.4,497.9 967.4,497.2 969.4,496.5 C971.4,495.9 973.4,495.1 975.4,494.5 C977.4,493.9 979.4,493.3 981.4,492.7 C983.4,492.1 985.5,491.6 987.5,491.1 C989.5,490.5 991.5,490.0 993.5,489.4 C995.5,488.8 997.5,488.2 999.5,487.6 C1001.5,487.1 1003.5,486.5 1005.5,486.2 C1007.5,485.8 1009.5,485.6 1011.5,485.5 C1013.5,485.3 1015.6,485.3 1017.6,485.3 C1019.6,485.3 1021.6,485.4 1023.6,485.5 C1025.6,485.7 1027.6,486.0 1029.6,486.4 C1031.6,486.7 1033.6,487.1 1035.6,487.6 C1037.6,488.0 1039.6,488.4 1041.6,488.8 C1043.6,489.2 1045.7,489.6 1047.7,490.0 C1049.7,490.4 1051.7,490.8 1053.7,491.3 C1055.7,491.7 1057.7,492.2 1059.7,492.8 C1061.7,493.4 1063.7,494.2 1065.7,495.0 C1067.7,495.7 1069.7,496.5 1071.7,497.3 C1073.7,498.1 1075.8,498.9 1077.8,499.7 C1079.8,500.5 1081.8,501.3 1083.8,502.3 C1085.8,503.3 1087.8,504.3 1089.8,505.6 C1091.8,506.8 1093.8,508.3 1095.8,509.7 C1097.8,511.2 1099.8,512.8 1101.8,514.2 C1103.8,515.7 1105.9,517.2 1107.9,518.6 C1109.9,520.0 1111.9,521.2 1113.9,522.5 C1115.9,523.8 1117.9,525.0 1119.9,526.3 C1121.9,527.5 1123.9,528.8 1125.9,530.0 C1127.9,531.2 1129.9,532.4 1131.9,533.4 C1133.9,534.4 1136.0,535.1 1138.0,536.0 C1140.0,536.9 1142.0,537.5 1144.0,538.6 C1146.0,539.7 1148.0,540.9 1150.0,542.4 C1152.0,543.8 1154.0,545.7 1156.0,547.3 C1158.0,548.9 1160.0,550.5 1162.0,552.0 C1164.0,553.5 1166.1,554.7 1168.1,556.1 C1170.1,557.6 1172.1,559.0 1174.1,560.5 C1176.1,561.9 1178.1,563.5 1180.1,564.8 C1182.1,566.1 1184.1,567.3 1186.1,568.4 C1188.1,569.6 1190.1,570.7 1192.1,571.9 C1194.1,573.0 1196.2,574.1 1198.2,575.3 C1200.2,576.4 1202.2,577.7 1204.2,578.7 C1206.2,579.6 1208.2,580.8 1210.2,581.2 C1212.2,581.6 1214.2,581.3 1216.2,581.0 C1218.2,580.7 1220.2,580.0 1222.2,579.4 C1224.2,578.7 1226.3,578.0 1228.3,577.4 C1230.3,576.8 1232.3,576.2 1234.3,575.6 C1236.3,575.0 1238.3,574.5 1240.3,573.8 C1242.3,573.2 1244.3,572.7 1246.3,571.9 C1248.3,571.0 1250.3,570.1 1252.3,568.8 C1254.3,567.5 1256.4,565.6 1258.4,564.0 C1260.4,562.4 1262.4,560.6 1264.4,559.1 C1266.4,557.6 1268.4,556.3 1270.4,555.2 C1272.4,554.1 1274.4,553.3 1276.4,552.5 C1278.4,551.6 1280.4,550.9 1282.4,550.0 C1284.4,549.2 1286.5,548.4 1288.5,547.3 C1290.5,546.3 1292.5,545.0 1294.5,543.7 C1296.5,542.5 1298.5,541.0 1300.5,539.8 C1302.5,538.6 1304.5,537.2 1306.5,536.3 C1308.5,535.4 1310.5,534.9 1312.5,534.5 C1314.5,534.1 1316.6,534.0 1318.6,533.9 C1320.6,533.8 1322.6,533.8 1324.6,534.0 C1326.6,534.2 1328.6,534.5 1330.6,535.0 C1332.6,535.5 1334.6,536.0 1336.6,537.0 C1338.6,538.0 1340.6,539.5 1342.6,541.2 C1344.6,542.9 1346.7,545.0 1348.7,547.3 C1350.7,549.6 1352.7,552.5 1354.7,554.9 C1356.7,557.2 1358.7,559.9 1360.7,561.4 C1362.7,563.0 1364.7,563.7 1366.7,564.5 C1368.7,565.2 1370.7,565.5 1372.7,566.0 C1374.7,566.5 1376.8,567.0 1378.8,567.4 C1380.8,567.9 1382.8,568.4 1384.8,568.9 C1386.8,569.4 1388.8,569.9 1390.8,570.4 C1392.8,570.9 1394.8,571.4 1396.8,571.9 C1398.8,572.4 1400.8,572.9 1402.8,573.5 C1404.8,574.1 1406.9,574.7 1408.9,575.4 C1410.9,576.1 1412.9,577.1 1414.9,577.9 C1416.9,578.7 1418.9,579.6 1420.9,580.3 C1422.9,580.9 1424.9,581.4 1426.9,581.8 C1428.9,582.2 1430.9,582.5 1432.9,582.8 C1434.9,583.1 1437.0,583.5 1439.0,583.6 C1441.0,583.7 1443.0,583.8 1445.0,583.5 C1447.0,583.2 1449.0,582.6 1451.0,582.0 C1453.0,581.4 1455.0,580.7 1457.0,580.0 C1459.0,579.4 1461.0,578.7 1463.0,578.1 C1465.0,577.4 1467.1,576.7 1469.1,576.1 C1471.1,575.6 1473.1,575.0 1475.1,574.8 C1477.1,574.6 1479.1,574.9 1481.1,575.2 C1483.1,575.5 1485.1,576.1 1487.1,576.6 C1489.1,577.2 1491.1,577.8 1493.1,578.5 C1495.1,579.1 1497.2,579.9 1499.2,580.6 C1501.2,581.4 1503.2,582.1 1505.2,582.8 C1507.2,583.5 1509.2,584.2 1511.2,584.9 C1513.2,585.5 1515.2,586.1 1517.2,586.7 C1519.2,587.4 1521.2,587.9 1523.2,588.6 C1525.2,589.2 1527.3,589.8 1529.3,590.6 C1531.3,591.5 1533.3,592.4 1535.3,593.6 C1537.3,594.8 1539.3,596.4 1541.3,597.8 C1543.3,599.3 1545.3,600.9 1547.3,602.2 C1549.3,603.4 1551.3,604.5 1553.3,605.3 C1555.3,606.1 1557.4,606.5 1559.4,606.9 C1561.4,607.3 1563.4,607.6 1565.4,607.9 C1567.4,608.2 1569.4,608.6 1571.4,608.7 C1573.4,608.9 1575.4,608.9 1577.4,608.9 C1579.4,608.8 1581.4,608.6 1583.4,608.4 C1585.4,608.2 1587.5,608.0 1589.5,607.8 C1591.5,607.6 1593.5,607.3 1595.5,607.1 C1597.5,606.9 1599.5,606.6 1601.5,606.3 C1603.5,606.1 1605.5,605.8 1607.5,605.4 C1609.5,605.0 1611.5,604.5 1613.5,603.7 C1615.5,603.0 1617.6,602.0 1619.6,601.1 C1621.6,600.1 1623.6,599.1 1625.6,598.1 C1627.6,597.1 1629.6,596.1 1631.6,595.1 C1633.6,594.0 1635.6,593.0 1637.6,592.0 C1639.6,591.0 1641.6,590.0 1643.6,589.0 C1645.6,588.0 1647.7,587.0 1649.7,586.0 C1651.7,585.0 1653.7,584.0 1655.7,583.0 C1657.7,582.0 1659.7,581.0 1661.7,579.8 C1663.7,578.7 1665.7,577.5 1667.7,576.2 C1669.7,574.9 1671.7,573.4 1673.7,572.1 C1675.7,570.8 1677.8,569.4 1679.8,568.4 C1681.8,567.5 1683.8,566.9 1685.8,566.3 C1687.8,565.8 1689.8,565.6 1691.8,565.2 C1693.8,564.9 1695.8,564.7 1697.8,564.5 C1699.8,564.3 1701.8,564.2 1703.8,564.2 C1705.8,564.1 1707.9,564.1 1709.9,564.0 C1711.9,564.0 1713.9,563.9 1715.9,563.9 C1717.9,563.9 1719.9,563.8 1721.9,563.8 C1723.9,563.7 1725.9,563.7 1727.9,563.7 C1729.9,563.6 1731.9,563.5 1733.9,563.5 C1735.9,563.6 1738.0,563.6 1740.0,563.8 C1742.0,564.0 1744.0,564.5 1746.0,564.6 C1748.0,564.7 1750.0,564.6 1752.0,564.4 C1754.0,564.1 1756.0,563.7 1758.0,563.1 C1760.0,562.5 1762.0,561.7 1764.0,560.7 C1766.0,559.8 1768.1,558.5 1770.1,557.4 C1772.1,556.2 1774.1,555.0 1776.1,553.8 C1778.1,552.6 1780.1,551.3 1782.1,550.1 C1784.1,548.9 1786.1,547.8 1788.1,546.6 C1790.1,545.5 1792.1,544.4 1794.1,543.2 C1796.1,542.1 1798.2,541.0 1800.2,539.9 C1802.2,538.8 1804.2,537.7 1806.2,536.6 C1808.2,535.5 1810.2,534.4 1812.2,533.3 C1814.2,532.2 1816.2,531.1 1818.2,530.1 C1820.2,529.0 1822.2,528.0 1824.2,527.2 C1826.2,526.3 1828.3,525.5 1830.3,524.8 C1832.3,524.0 1834.3,523.3 1836.3,522.5 C1838.3,521.8 1840.3,521.0 1842.3,520.3 C1844.3,519.6 1846.3,518.8 1848.3,518.1 C1850.3,517.3 1852.3,516.6 1854.3,515.7 C1856.3,514.8 1858.4,513.9 1860.4,512.8 C1862.4,511.7 1864.4,510.4 1866.4,509.1 C1868.4,507.8 1870.4,506.4 1872.4,505.0 C1874.4,503.7 1876.4,502.2 1878.4,500.8 C1880.4,499.5 1882.4,498.0 1884.4,497.0 C1886.4,495.9 1888.5,495.1 1890.5,494.3 C1892.5,493.6 1894.5,493.3 1896.5,492.7 C1898.5,492.0 1900.5,491.3 1902.5,490.3 C1904.5,489.3 1906.5,488.1 1908.5,486.7 C1910.5,485.3 1912.5,483.8 1914.5,482.0 C1916.5,480.2 1918.6,478.1 1920.6,475.9 C1922.6,473.7 1924.6,471.5 1926.6,468.6 C1928.6,465.8 1930.6,462.7 1932.6,459.0 C1934.6,455.3 1936.6,450.9 1938.6,446.3 C1940.6,441.7 1942.6,436.2 1944.6,431.4 C1946.6,426.5 1948.7,421.8 1950.7,417.2 C1952.7,412.7 1954.7,408.3 1956.7,404.1 C1958.7,399.9 1960.7,395.8 1962.7,391.8 C1964.7,387.8 1966.7,383.9 1968.7,380.1 C1970.7,376.3 1972.7,372.8 1974.7,369.2 C1976.7,365.6 1978.8,362.2 1980.8,358.5 C1982.8,354.8 1984.8,351.1 1986.8,347.2 C1988.8,343.3 1990.8,339.3 1992.8,335.1 C1994.8,330.9 1996.8,326.5 1998.8,322.1 C2000.8,317.6 2002.8,313.1 2004.8,308.6 C2006.8,304.1 2008.9,299.6 2010.9,295.2 C2012.9,290.8 2014.9,286.1 2016.9,282.2 C2018.9,278.2 2020.9,274.9 2022.9,271.5 C2024.9,268.1 2027.9,263.4 2028.9,261.7" fill="none" stroke="#3fbaf2" stroke-width="3.4" stroke-linejoin="round" stroke-linecap="round"/>
<polygon points="479,437.5 1946,437.5 1946,444.5 479,444.5" fill="#2400f5"/>
<polygon points="413,612 1952,618.5 1952,625.5 413,619" fill="#2400f5"/>
<line x1="1897.5" y1="494" x2="1897.5" y2="432" stroke="#f7d900" stroke-width="4"/>
<polygon points="1888,435 1907,435 1897.5,415" fill="#f7d900"/>
<line x1="1908" y1="410" x2="1930" y2="290" stroke="#f070ee" stroke-width="4"/>
<polygon points="1922,289 1944,292 1935,269" fill="#f070ee"/>
<line x1="1936" y1="258" x2="1986" y2="183" stroke="#b88e66" stroke-width="4"/>
<polygon points="1977,178 1993,190 1997.5,166.5" fill="#b88e66"/>
<rect x="1999.5" y="229.9" width="83.2" height="54.7" fill="none" stroke="#ee6ff0" stroke-width="4"/>
<rect x="2026.7" y="215" width="5" height="27" fill="none" stroke="#5ab4ee" stroke-width="1.5"/>
<text x="77.5" y="839" font-family="Liberation Sans" font-size="88" fill="rgba(255,255,255,0.2)" textLength="43" lengthAdjust="spacingAndGlyphs">s</text>
<path d="M132.2,781.7 H141.1 V792.8 H156.1 V800.6 H141.1 V838.3 H132.2 V800.6 H123.3 V792.8 H132.2 Z" fill="rgba(255,255,255,0.2)"/>
<circle cx="178.9" cy="815.5" r="18.9" fill="none" stroke="rgba(255,255,255,0.2)" stroke-width="8.8"/>
<path d="M245.5,803.9 A18.9,18.9 0 1 0 245.5,827.1" fill="none" stroke="rgba(255,255,255,0.2)" stroke-width="8.8"/>
<path d="M260.6,781.7 H268.9 V838.3 H260.6 Z M268.9,820.5 L291.3,792.8 H302.4 L268.9,832 Z M277.5,815 L284,808 L304,838.3 H294 Z" fill="rgba(255,255,255,0.2)"/>
<polygon points="302.2,772.8 335,772.8 328.5,781.1 302.2,781.1" fill="rgba(255,255,255,0.2)"/>
<path d="M306.9,799.2 A12.3,12.3 0 1 0 323.2,786" fill="none" stroke="rgba(255,255,255,0.2)" stroke-width="8.5"/>
<rect x="2289" y="165.00" width="8" height="2" fill="#8b8e94"/>
<text x="2307" y="172.8" font-family="Liberation Sans" font-size="21" fill="#8b8e94" text-anchor="start" textLength="113" lengthAdjust="spacingAndGlyphs">100.000,00</text>
<rect x="2289" y="269.40" width="8" height="2" fill="#8b8e94"/>
<text x="2307" y="277.2" font-family="Liberation Sans" font-size="21" fill="#8b8e94" text-anchor="start" textLength="100" lengthAdjust="spacingAndGlyphs">90.000,00</text>
<rect x="2289" y="373.80" width="8" height="2" fill="#8b8e94"/>
<text x="2307" y="381.6" font-family="Liberation Sans" font-size="21" fill="#8b8e94" text-anchor="start" textLength="100" lengthAdjust="spacingAndGlyphs">80.000,00</text>
<rect x="2289" y="478.20" width="8" height="2" fill="#8b8e94"/>
<text x="2307" y="486.0" font-family="Liberation Sans" font-size="21" fill="#8b8e94" text-anchor="start" textLength="100" lengthAdjust="spacingAndGlyphs">70.000,00</text>
<rect x="2289" y="582.60" width="8" height="2" fill="#8b8e94"/>
<text x="2307" y="590.4" font-family="Liberation Sans" font-size="21" fill="#8b8e94" text-anchor="start" textLength="100" lengthAdjust="spacingAndGlyphs">60.000,00</text>
<rect x="2289" y="687.00" width="8" height="2" fill="#8b8e94"/>
<text x="2307" y="694.8" font-family="Liberation Sans" font-size="21" fill="#8b8e94" text-anchor="start" textLength="100" lengthAdjust="spacingAndGlyphs">50.000,00</text>
<rect x="2289" y="791.40" width="8" height="2" fill="#8b8e94"/>
<text x="2307" y="799.2" font-family="Liberation Sans" font-size="21" fill="#8b8e94" text-anchor="start" textLength="100" lengthAdjust="spacingAndGlyphs">40.000,00</text>
<rect x="2289" y="895.80" width="8" height="2" fill="#8b8e94"/>
<text x="2307" y="903.6" font-family="Liberation Sans" font-size="21" fill="#8b8e94" text-anchor="start" textLength="100" lengthAdjust="spacingAndGlyphs">30.000,00</text>
<rect x="2289" y="945.70" width="8" height="2" fill="#8b8e94"/>
<text x="2307.8" y="953.5" font-family="Liberation Sans" font-size="21" fill="#8b8e94" text-anchor="start" textLength="68.4" lengthAdjust="spacingAndGlyphs">100,00</text>
<rect x="2289" y="1024.70" width="8" height="2" fill="#8b8e94"/>
<text x="2307.8" y="1032.5" font-family="Liberation Sans" font-size="21" fill="#8b8e94" text-anchor="start" textLength="54.8" lengthAdjust="spacingAndGlyphs">50,00</text>
<rect x="2289" y="1103.70" width="8" height="2" fill="#8b8e94"/>
<text x="2307.8" y="1111.5" font-family="Liberation Sans" font-size="21" fill="#8b8e94" text-anchor="start" textLength="41.5" lengthAdjust="spacingAndGlyphs">0,00</text>
<text x="232" y="921" font-family="Liberation Sans" font-size="21" fill="#8b8e94" text-anchor="middle">Feb</text>
<text x="405.5" y="921" font-family="Liberation Sans" font-size="21" fill="#8b8e94" text-anchor="middle">Mär</text>
<text x="592.4" y="921" font-family="Liberation Sans" font-size="21" fill="#8b8e94" text-anchor="middle">Apr</text>
<text x="773" y="921" font-family="Liberation Sans" font-size="21" fill="#8b8e94" text-anchor="middle">Mai</text>
<text x="960" y="921" font-family="Liberation Sans" font-size="21" fill="#8b8e94" text-anchor="middle">Jun</text>
<text x="1140" y="921" font-family="Liberation Sans" font-size="21" fill="#8b8e94" text-anchor="middle">Jul</text>
<text x="1326" y="921" font-family="Liberation Sans" font-size="21" fill="#8b8e94" text-anchor="middle">Aug</text>
<text x="1512.8" y="921" font-family="Liberation Sans" font-size="21" fill="#8b8e94" text-anchor="middle">Sep</text>
<text x="1693" y="921" font-family="Liberation Sans" font-size="21" fill="#8b8e94" text-anchor="middle">Okt</text>
<text x="1881" y="921" font-family="Liberation Sans" font-size="21" fill="#8b8e94" text-anchor="middle">Nov</text>
<polygon points="2288,233 2301,216.5 2430,216.5 2430,249.5 2301,249.5" fill="#f24f5b"/>
<text x="2307" y="240.3" font-family="Liberation Sans" font-size="21" fill="#0a0a0a" text-anchor="start" textLength="100" lengthAdjust="spacingAndGlyphs">93.561,06</text>
<polygon points="2288,521.7 2301,505.20000000000005 2430,505.20000000000005 2430,538.2 2301,538.2" fill="#ffffff"/>
<text x="2307" y="529.0" font-family="Liberation Sans" font-size="21" fill="#0a0a0a" text-anchor="start" textLength="100" lengthAdjust="spacingAndGlyphs">65.923,64</text>
<polygon points="2288,660 2301,643.5 2430,643.5 2430,676.5 2301,676.5" fill="#ffffff"/>
<text x="2307" y="667.3" font-family="Liberation Sans" font-size="21" fill="#0a0a0a" text-anchor="start" textLength="100" lengthAdjust="spacingAndGlyphs">52.743,68</text>
<line x1="74" y1="992.5" x2="2286" y2="992.5" stroke="#19d98a" stroke-width="2" stroke-dasharray="2,4.6"/>
<line x1="74" y1="1059" x2="2286" y2="1059" stroke="#f0505a" stroke-width="2" stroke-dasharray="2,4.6"/>
<polygon points="280.7,992.5 289.6,989.1 297.0,981.7 304.4,986.7 309.4,979.8 315.6,981.7 321.7,979.8 329.1,983.7 334.1,982.2 341.5,985.4 346.4,986.2 350.4,992.5" fill="#0f7b58"/>
<polygon points="378.9,992.5 383.5,984.2 393.3,968.1 404.4,965.7 411.9,975.6 424.2,964.4 428.9,992.5" fill="#0f7b58"/>
<polygon points="431.8,992.5 435.3,990.4 447.7,984.2 460.0,984.2 466.2,976.8 471.1,985.4 478.5,981.7 484.7,991.6 485.0,992.5" fill="#0f7b58"/>
<polygon points="1860.7,992.5 1860.9,992.1 1862.9,992.5" fill="#0f7b58"/>
<polygon points="1921.6,992.5 1927.5,991.1 1938.6,972.3 1943.6,971.9 1952.2,969.4 1957.2,971.4 1964.6,969.4 1976.9,980.5 1993.0,974.3 2000.4,967.4 2006.5,967.4 2012.7,975.6 2018.9,973.1 2024.0,992.5" fill="#0f7b58"/>
<polyline points="71.9,1017.0 82.2,1017.0 86.7,999.5 94.6,1006.4 99.5,1002.7 104.4,1007.7 110.6,1032.3 116.8,1028.6 124.2,1033.1 135.3,1027.4 148.9,1038.5 160.0,1034.1 166.2,1036.0 171.1,1046.4 178.0,1048.4 184.7,1044.7 190.4,1043.5 195.3,1027.4 200.7,1025.7 207.7,1027.4 213.1,1018.8 220.0,1015.1 224.9,1022.5 237.8,1018.8 245.2,1020.7 255.1,1026.2 263.0,1018.8 274.8,1004.0 279.8,992.8 289.6,989.1 297.0,981.7 304.4,986.7 309.4,979.8 315.6,981.7 321.7,979.8 329.1,983.7 334.1,982.2 341.5,985.4 346.4,986.2 351.4,994.1 357.5,994.1 363.7,1003.2 369.9,997.8 376.0,997.8 383.5,984.2 393.3,968.1 404.4,965.7 411.9,975.6 424.2,964.4 429.1,994.1 435.3,990.4 447.7,984.2 460.0,984.2 466.2,976.8 471.1,985.4 478.5,981.7 484.7,991.6 489.6,1004.0 493.8,1010.1 505.7,1011.4 509.4,1012.6 514.3,1028.6 520.5,1015.1 532.8,1029.1 551.4,1009.4 558.8,1010.1 562.5,1013.3 569.9,1008.9 578.5,1013.8 585.9,1010.1 592.1,1015.1 598.3,1029.9 604.4,1029.9 609.4,1021.2 618.0,1023.7 624.2,1020.0 630.4,1018.3 635.3,1010.1 640.2,1020.0 648.8,1016.5 656.2,1026.2 663.6,1041.0 671.0,1038.0 675.9,1039.8 682.1,1036.0 688.3,1044.7 694.4,1035.6 701.9,1030.6 713.0,1030.6 719.1,1021.7 726.5,1023.7 731.5,1032.3 736.4,1031.1 742.6,1032.3 748.8,1036.5 756.2,1034.1 761.1,1036.5 772.2,1055.3 778.4,1048.4 785.8,1028.6 792.0,1024.9 798.1,1025.7 810.5,1028.6 815.9,1036.0 822.8,1031.1 827.3,1038.0 840.1,1034.1 845.1,1026.2 852.5,1032.3 857.4,1013.3 863.6,1015.1 869.8,1009.4 875.9,1009.4 882.1,1012.6 887.0,1001.0 894.4,1001.0 898.1,1002.7 905.6,1011.9 913.0,1007.7 919.1,1008.4 924.1,1011.9 929.0,1006.9 936.4,1016.3 941.4,1019.3 948.8,1015.1 953.7,1020.7 964.8,1020.7 971.0,1011.9 980.9,1002.7 990.7,1006.4 995.7,1017.5 1003.1,1017.0 1008.0,1013.3 1014.2,1015.1 1020.4,1031.1 1025.3,1024.2 1032.7,1033.6 1037.7,1036.5 1045.1,1038.5 1050.0,1034.1 1057.4,1034.1 1063.6,1041.5 1068.5,1043.5 1074.7,1043.5 1079.6,1048.4 1084.6,1047.2 1092.0,1048.9 1098.1,1065.7 1103.1,1049.6 1109.3,1053.3 1115.4,1049.6 1121.6,1055.3 1129.0,1048.4 1140.1,1033.1 1151.2,1045.9 1163.6,1060.7 1169.8,1050.4 1175.9,1055.8 1182.1,1054.6 1188.3,1046.4 1195.7,1047.9 1203.1,1046.4 1206.8,1046.4 1213.0,1036.0 1217.9,1021.2 1225.3,1008.9 1230.2,1006.4 1238.8,1009.9 1248.6,999.0 1253.6,997.0 1259.8,993.6 1265.9,996.5 1270.9,1011.9 1278.3,1013.8 1283.2,1011.9 1295.6,999.5 1307.9,1007.7 1314.1,1017.5 1320.2,1025.7 1325.2,1025.7 1332.6,1041.0 1344.9,1054.6 1349.9,1063.2 1356.0,1052.1 1362.2,1055.3 1367.2,1028.6 1374.6,1030.6 1380.7,1029.1 1388.1,1036.5 1393.1,1036.5 1399.3,1027.4 1410.4,1039.8 1416.5,1033.1 1422.7,1032.3 1430.1,1030.6 1435.1,1033.1 1441.2,1033.1 1446.2,1021.7 1452.3,1024.9 1458.5,1010.1 1464.7,1013.3 1470.9,1011.9 1475.8,1016.8 1484.4,1029.9 1489.4,1034.8 1496.8,1033.1 1501.7,1034.8 1506.7,1034.8 1512.8,1038.0 1519.0,1034.1 1525.2,1038.0 1531.4,1038.5 1537.5,1046.4 1543.7,1055.3 1554.8,1049.6 1561.0,1030.6 1569.6,1031.1 1573.3,1033.1 1579.5,1029.1 1585.7,1016.8 1591.9,1016.8 1596.8,1020.0 1603.0,1028.6 1609.1,1016.8 1615.3,1018.8 1621.5,1006.4 1633.8,1006.4 1638.8,1008.4 1644.9,1004.4 1651.1,1002.7 1656.0,1007.7 1664.7,998.5 1669.6,997.0 1680.7,997.0 1693.1,1031.1 1699.3,1033.6 1705.4,1033.6 1710.4,1023.7 1717.8,1025.7 1730.1,1016.8 1741.2,1033.1 1747.4,1036.5 1752.3,1020.0 1759.8,1018.3 1764.7,1020.0 1770.9,1006.9 1777.0,1005.2 1784.4,999.5 1789.4,1002.7 1795.6,997.0 1801.7,999.0 1806.7,997.8 1814.1,1005.2 1820.2,1009.4 1826.4,1015.1 1831.4,1006.4 1834.9,1012.6 1842.3,1015.1 1855.9,1001.5 1860.9,992.1 1868.3,993.6 1873.2,1007.7 1880.6,1013.3 1886.8,1014.3 1897.9,1024.2 1902.8,1015.1 1908.5,996.5 1920.1,992.8 1927.5,991.1 1938.6,972.3 1943.6,971.9 1952.2,969.4 1957.2,971.4 1964.6,969.4 1976.9,980.5 1993.0,974.3 2000.4,967.4 2006.5,967.4 2012.7,975.6 2018.9,973.1 2025.1,996.5 2029.5,999.5" fill="none" stroke="#fbd98c" stroke-width="3.2" stroke-linejoin="round" stroke-linecap="round"/>
<rect x="268.8" y="942.6" width="231" height="75.3" fill="none" stroke="#6a00d2" stroke-width="11.6"/>
<rect x="1914" y="945.6" width="183" height="62" fill="none" stroke="#6a00d2" stroke-width="11.8"/>
<rect x="81" y="138.4" width="951" height="27" fill="#0a0c10"/>
<rect x="81" y="166" width="239" height="27.5" fill="#0a0c10"/>
<rect x="81" y="194" width="225.5" height="27.5" fill="#0a0c10"/>
<rect x="81" y="222" width="237.5" height="27" fill="#0a0c10"/>
<rect x="81" y="249.5" width="506.4" height="28" fill="#0a0c10"/>
<line x1="84.9" y1="144" x2="84.9" y2="159.5" stroke="#f2545d" stroke-width="1.9"/>
<rect x="83.0" y="146.5" width="3.8" height="8.0" rx="1" fill="#0a0c10" stroke="#f2545d" stroke-width="1.8"/>
<line x1="92.2" y1="142" x2="92.2" y2="159.5" stroke="#f2545d" stroke-width="1.9"/>
<rect x="90.3" y="148" width="3.8" height="8.5" rx="1" fill="#0a0c10" stroke="#f2545d" stroke-width="1.8"/>
<line x1="99.3" y1="145" x2="99.3" y2="160" stroke="#f2545d" stroke-width="1.9"/>
<rect x="97.39999999999999" y="152" width="3.8" height="7.5" rx="1" fill="#0a0c10" stroke="#f2545d" stroke-width="1.8"/>
<text x="113" y="158.6" font-family="Liberation Sans" font-size="19" fill="#f2545d" text-anchor="start" textLength="397.8" lengthAdjust="spacingAndGlyphs">Bitcoin BTC/USD (Coinbase Advanced, Last)</text>
<text x="520.8" y="158.6" font-family="Liberation Sans" font-size="19" fill="#f2545d" text-anchor="start" textLength="116.6" lengthAdjust="spacingAndGlyphs">O: 94.391,03</text>
<text x="650.5" y="158.6" font-family="Liberation Sans" font-size="19" fill="#f2545d" text-anchor="start" textLength="116.5" lengthAdjust="spacingAndGlyphs">H: 95.065,50</text>
<text x="778.4" y="158.6" font-family="Liberation Sans" font-size="19" fill="#f2545d" text-anchor="start" textLength="112.7" lengthAdjust="spacingAndGlyphs">L: 92.739,89</text>
<text x="904" y="158.6" font-family="Liberation Sans" font-size="19" fill="#f2545d" text-anchor="start" textLength="116.6" lengthAdjust="spacingAndGlyphs">C: 93.561,06</text>
<rect x="87.4" y="177.6" width="14.4" height="5.7" fill="#41b9f1"/>
<text x="113" y="186.3" font-family="Liberation Sans" font-size="19" fill="#41b9f1" text-anchor="start" textLength="92.6" lengthAdjust="spacingAndGlyphs">DEMA(50)</text>
<text x="216.4" y="186.3" font-family="Liberation Sans" font-size="19" fill="#41b9f1" text-anchor="start" textLength="92.2" lengthAdjust="spacingAndGlyphs">90.803,40</text>
<rect x="87.4" y="205.9" width="14.4" height="5.7" fill="#f4f07c"/>
<text x="113" y="214.2" font-family="Liberation Sans" font-size="19" fill="#f4f07c" text-anchor="start" textLength="79.2" lengthAdjust="spacingAndGlyphs">EMA(50)</text>
<text x="202" y="214.2" font-family="Liberation Sans" font-size="19" fill="#f4f07c" text-anchor="start" textLength="91.8" lengthAdjust="spacingAndGlyphs">79.963,87</text>
<rect x="87.4" y="233.9" width="14.4" height="5.7" fill="#a47cf2"/>
<text x="113" y="242" font-family="Liberation Sans" font-size="19" fill="#a47cf2" text-anchor="start" textLength="90.8" lengthAdjust="spacingAndGlyphs">EMA(200)</text>
<text x="214.2" y="242" font-family="Liberation Sans" font-size="19" fill="#a47cf2" text-anchor="start" textLength="92.3" lengthAdjust="spacingAndGlyphs">67.090,53</text>
<circle cx="93.7" cy="262.8" r="8.4" fill="none" stroke="#eceef2" stroke-width="1.9"/>
<polyline points="93,257.6 93,261.8 96.8,265.8" fill="none" stroke="#eceef2" stroke-width="1.9"/>
<text x="113" y="270.2" font-family="Liberation Sans" font-size="19" fill="#eceef2" text-anchor="start" textLength="230.5" lengthAdjust="spacingAndGlyphs">05.01.2024 - 26.11.2024</text>
<text x="358.9" y="270.2" font-family="Liberation Sans" font-size="19" fill="#eceef2" text-anchor="start" textLength="216.4" lengthAdjust="spacingAndGlyphs">(CET, 11 Monate, 1 Tag)</text>
<rect x="81" y="946.7" width="174" height="27" fill="#0a0c10"/>
<rect x="87.4" y="957.9" width="14.4" height="5.9" fill="#fbd98c"/>
<text x="113" y="966.4" font-family="Liberation Sans" font-size="19" fill="#fbd98c" text-anchor="start" textLength="68" lengthAdjust="spacingAndGlyphs">RSI(14)</text>
<text x="190.9" y="966.4" font-family="Liberation Sans" font-size="19" fill="#fbd98c" text-anchor="start" textLength="52.3" lengthAdjust="spacingAndGlyphs">66,59</text>
<path d="M2430,1104 V1116 H2418 A12,12 0 0 0 2430,1104 Z" fill="#1c2029"/>
<rect x="0" y="0" width="2430" height="129" fill="#181d25"/>
<rect x="0" y="129" width="72" height="987" fill="#181d25"/>
<rect x="0" y="130" width="72" height="1.5" fill="#2c3038"/>
<rect x="0" y="1113.4" width="2430" height="1.6" fill="#2b2f38"/>
<rect x="0" y="1115" width="2430" height="1" fill="#0a0a0c"/>
<text x="-1" y="41.6" font-family="Liberation Sans" font-size="28" fill="#eef0f4" font-weight="bold" text-anchor="start" textLength="325" lengthAdjust="spacingAndGlyphs">Gráfico Bitcoin BTC/USD</text>
<rect x="-20" y="78" width="140" height="45" rx="10" fill="#1f6fe5"/>
<polygon points="118,112 118,121 109,121" fill="#8b929c"/>
<line x1="3.10" y1="89.00" x2="3.10" y2="106.80" stroke="#f2f4f8" stroke-width="2.00"/><rect x="1.10" y="92.00" width="4.00" height="12.00" fill="#1f6fe5" stroke="#f2f4f8" stroke-width="1.90"/><line x1="9.60" y1="94.00" x2="9.60" y2="108.80" stroke="#f2f4f8" stroke-width="2.00"/><rect x="7.60" y="97.20" width="4.00" height="9.30" fill="#1f6fe5" stroke="#f2f4f8" stroke-width="1.90"/><line x1="16.20" y1="89.00" x2="16.20" y2="108.80" stroke="#f2f4f8" stroke-width="2.00"/><rect x="14.20" y="90.50" width="4.00" height="13.50" fill="#1f6fe5" stroke="#f2f4f8" stroke-width="1.90"/>
<text x="35.3" y="105.3" font-family="Liberation Sans" font-size="20" fill="#f2f4f8" font-weight="bold" text-anchor="start">cuadro</text>
<rect x="129.5" y="78.5" width="118" height="44" rx="10" fill="#2a2f3b" stroke="#3a3f4b" stroke-width="1"/>
<polygon points="245.5,113.5 245.5,121 237.5,121" fill="#8b929c"/>
<circle cx="153" cy="97.5" r="7.6" fill="none" stroke="#f2f4f8" stroke-width="2.1"/>
<line x1="158.6" y1="103.2" x2="164" y2="108.4" stroke="#f2f4f8" stroke-width="2.3"/>
<text x="179.3" y="105.3" font-family="Liberation Sans" font-size="20" fill="#f2f4f8" font-weight="bold" text-anchor="start">Valor</text>
<rect x="256.5" y="78.5" width="171" height="44" rx="10" fill="#2a2f3b" stroke="#3a3f4b" stroke-width="1"/>
<rect x="375.7" y="79" width="1.2" height="43" fill="#3a3f4b"/>
<line x1="275.20" y1="89.00" x2="275.20" y2="106.80" stroke="#f2f4f8" stroke-width="2.00"/><rect x="273.20" y="92.00" width="4.00" height="12.00" fill="#2a2f3b" stroke="#f2f4f8" stroke-width="1.90"/><line x1="281.70" y1="94.00" x2="281.70" y2="108.80" stroke="#f2f4f8" stroke-width="2.00"/><rect x="279.70" y="97.20" width="4.00" height="9.30" fill="#2a2f3b" stroke="#f2f4f8" stroke-width="1.90"/><line x1="288.30" y1="89.00" x2="288.30" y2="108.80" stroke="#f2f4f8" stroke-width="2.00"/><rect x="286.30" y="90.50" width="4.00" height="13.50" fill="#2a2f3b" stroke="#f2f4f8" stroke-width="1.90"/>
<text x="306" y="105.3" font-family="Liberation Sans" font-size="20" fill="#f2f4f8" font-weight="bold" text-anchor="start">Velas</text>
<text x="390" y="105.3" font-family="Liberation Sans" font-size="20" fill="#f2f4f8" font-weight="bold" text-anchor="start">1d</text>
<rect x="438.1" y="78.5" width="148.79999999999995" height="44" rx="10" fill="#2a2f3b" stroke="#3a3f4b" stroke-width="1"/>
<circle cx="461.8" cy="99.1" r="9" fill="none" stroke="#f2f4f8" stroke-width="2.1"/>
<polyline points="461.8,92.3 461.8,99.3 466.7,99.3" fill="none" stroke="#f2f4f8" stroke-width="2.1"/>
<text x="486.8" y="105.3" font-family="Liberation Sans" font-size="20" fill="#f2f4f8" font-weight="bold" text-anchor="start" textLength="82" lengthAdjust="spacingAndGlyphs">6 meses</text>
<rect x="597.8" y="78.5" width="180.30000000000007" height="44" rx="10" fill="#2a2f3b" stroke="#3a3f4b" stroke-width="1"/>
<text x="611.5" y="106.5" font-family="Liberation Sans" font-size="21" font-weight="bold" font-style="italic" fill="#f2f4f8" textLength="19.5" lengthAdjust="spacingAndGlyphs">fx</text>
<text x="647.4" y="105.3" font-family="Liberation Sans" font-size="20" fill="#f2f4f8" font-weight="bold" text-anchor="start">Indicadores</text>
<path d="M840,78.5 H797.5 A10,10 0 0 0 787.5,88.5 V112.5 A10,10 0 0 0 797.5,122.5 H840" fill="#2a2f3b" stroke="#3a3f4b" stroke-width="1"/>
<rect x="840.5" y="78.5" width="213.5999999999999" height="44" rx="10" fill="#2a2f3b" stroke="#3a3f4b" stroke-width="1"/>
<rect x="893" y="79" width="1.2" height="43" fill="#3a3f4b"/>
<rect x="947" y="79" width="1.2" height="43" fill="#3a3f4b"/>
<rect x="1000" y="79" width="1.2" height="43" fill="#3a3f4b"/>
<polygon points="807.5,92 816.5,92 816.5,106 812,101.8 807.5,106" fill="#f2f4f8"/>
<rect x="858" y="89" width="19" height="18.5" fill="#f2f4f8"/>
<path d="M861.5,92 H873.5 V96 H872.3 L871.7,94 H868.9 V103.6 H870.7 V105 H864.3 V103.6 H866.1 V94 H863.3 L862.7,96 H861.5 Z" fill="#2a2f3b"/>
<line x1="909.5" y1="98.5" x2="931" y2="98.5" stroke="#f2f4f8" stroke-width="2"/>
<circle cx="920.3" cy="98.5" r="3.3" fill="#2a2f3b" stroke="#f2f4f8" stroke-width="2"/>
<line x1="967" y1="101.5" x2="978" y2="91" stroke="#f2f4f8" stroke-width="1.8"/>
<line x1="971" y1="108" x2="983" y2="96.5" stroke="#f2f4f8" stroke-width="1.8"/>
<circle cx="978.5" cy="91" r="2.7" fill="#2a2f3b" stroke="#f2f4f8" stroke-width="1.8"/>
<circle cx="967" cy="101.7" r="2.7" fill="#2a2f3b" stroke="#f2f4f8" stroke-width="1.8"/>
<circle cx="977.8" cy="101.7" r="2.7" fill="#2a2f3b" stroke="#f2f4f8" stroke-width="1.8"/>
<line x1="1027.5" y1="87" x2="1027.5" y2="110" stroke="#f2f4f8" stroke-width="2"/>
<circle cx="1027.5" cy="98.5" r="3.1" fill="#2a2f3b" stroke="#f2f4f8" stroke-width="2"/>
<rect x="2147.7" y="78.5" width="50.30000000000018" height="44" rx="10" fill="#2a2f3b" stroke="#3a3f4b" stroke-width="1"/>
<path d="M2170.8,91.3 Q2171.4,99.4 2179.5,100 Q2171.4,100.6 2170.8,108.7 Q2170.2,100.6 2162.1,100 Q2170.2,99.4 2170.8,91.3 Z" fill="#f2f4f8"/>
<path d="M2178.8,89.8 V97.2 M2175.1,93.5 H2182.5" stroke="#f2f4f8" stroke-width="1.8"/>
<circle cx="2165.7" cy="92.7" r="1.5" fill="#f2f4f8"/>
<circle cx="2178.8" cy="105.4" r="1.7" fill="#f2f4f8"/>
<rect x="2210.2" y="78" width="143.7" height="45" rx="10" fill="#1f6fe5"/>
<text x="2224.5" y="108" font-family="Liberation Sans" font-size="25" fill="#f2f4f8" textLength="15" lengthAdjust="spacingAndGlyphs">$</text>
<text x="2246.8" y="107" font-family="Liberation Sans" font-size="20" fill="#f2f4f8" font-weight="bold" text-anchor="start" textLength="93.1" lengthAdjust="spacingAndGlyphs">Comercio</text>
<rect x="2364.5" y="78.5" width="51.59999999999991" height="44" rx="10" fill="#2a2f3b" stroke="#3a3f4b" stroke-width="1"/>
<polygon points="2399.30,98.90 2399.21,100.30 2396.91,101.13 2396.55,102.19 2396.05,103.20 2397.09,105.41 2396.17,106.47 2395.11,107.39 2392.90,106.35 2391.89,106.85 2390.83,107.21 2390.00,109.51 2388.60,109.60 2387.20,109.51 2386.37,107.21 2385.31,106.85 2384.30,106.35 2382.09,107.39 2381.03,106.47 2380.11,105.41 2381.15,103.20 2380.65,102.19 2380.29,101.13 2377.99,100.30 2377.90,98.90 2377.99,97.50 2380.29,96.67 2380.65,95.61 2381.15,94.60 2380.11,92.39 2381.03,91.33 2382.09,90.41 2384.30,91.45 2385.31,90.95 2386.37,90.59 2387.20,88.29 2388.60,88.20 2390.00,88.29 2390.83,90.59 2391.89,90.95 2392.90,91.45 2395.11,90.41 2396.17,91.33 2397.09,92.39 2396.05,94.60 2396.55,95.61 2396.91,96.67 2399.21,97.50" fill="#f2f4f8"/>
<circle cx="2388.6" cy="98.9" r="5.6" fill="#2a2f3b"/>
<path d="M2289.9,33 V21 H2301.9 M2305,21 H2316.7 V33 M2316.7,36 V47.9 H2305 M2301.9,47.9 H2289.9 V36" fill="none" stroke="#f2f4f8" stroke-width="2"/>
<path d="M2366.2,33 V21 H2338.9 V47.9 H2350 M2354.6,47.9 H2366.2 V36" fill="none" stroke="#f2f4f8" stroke-width="2"/>
<line x1="2352.5" y1="34.5" x2="2365.5" y2="47.2" stroke="#f2f4f8" stroke-width="2"/>
<path d="M2393,25.8 L2409.3,42.5 M2409.3,25.8 L2393,42.5" stroke="#f2f4f8" stroke-width="2"/>
<rect x="5" y="160.8" width="39" height="39" rx="2" fill="#1f6fe5"/>
<polygon points="11.2,170.2 26.9,170.2 23.3,174.7 11.2,174.7" fill="#f2f4f8"/>
<path d="M13.6,183.7 A5.7,5.7 0 1 0 21.06,178.28" fill="none" stroke="#f2f4f8" stroke-width="3.8"/>
<path d="M33.35,170.5 V181.4 M28,176.05 H39" stroke="#f2f4f8" stroke-width="2.7"/>
<line x1="10" y1="266" x2="41" y2="266" stroke="#f2f4f8" stroke-width="2.5"/>
<circle cx="25.5" cy="266" r="3.8" fill="#181d25" stroke="#f2f4f8" stroke-width="2.5"/>
<polygon points="25.5,344 12.7,365.4 38.3,365.4" fill="none" stroke="#f2f4f8" stroke-width="2.6"/>
<line x1="10" y1="431.1" x2="28" y2="431.1" stroke="#f2f4f8" stroke-width="2.2"/>
<line x1="10" y1="436" x2="23" y2="436" stroke="#f2f4f8" stroke-width="2.2"/>
<line x1="10" y1="441" x2="18" y2="441" stroke="#f2f4f8" stroke-width="2.2"/>
<line x1="33" y1="441" x2="41" y2="441" stroke="#f2f4f8" stroke-width="2.2"/>
<line x1="28" y1="446" x2="41" y2="446" stroke="#f2f4f8" stroke-width="2.2"/>
<line x1="23" y1="450.7" x2="41" y2="450.7" stroke="#f2f4f8" stroke-width="2.2"/>
<line x1="15" y1="450.7" x2="35.1" y2="431.1" stroke="#f2f4f8" stroke-width="2"/>
<circle cx="35.1" cy="431.1" r="3.6" fill="#181d25" stroke="#f2f4f8" stroke-width="2.2"/>
<circle cx="15" cy="450.7" r="3.6" fill="#181d25" stroke="#f2f4f8" stroke-width="2.2"/>
<rect x="12.9" y="516.5" width="25.1" height="25.1" fill="#f2f4f8"/>
<path d="M16.5,519.8 H34.5 V525 H33 L32.3,522.3 H28 V536.5 H30.5 V538.7 H20.5 V536.5 H23 V522.3 H18.7 L18,525 H16.5 Z" fill="#181d25"/>
<path d="M21.5,606.8 H11 V624.7 H22.3 M11,615.5 H19.5" fill="none" stroke="#f2f4f8" stroke-width="2.4"/>
<line x1="22.3" y1="624.7" x2="38.5" y2="608.5" stroke="#f2f4f8" stroke-width="2.4"/>
<polygon points="41,606 40.6,616 31,606.4" fill="#f2f4f8"/>
<rect x="0" y="667.3" width="62.6" height="1.3" fill="#2c3038"/>
<line x1="11.5" y1="703" x2="35" y2="727" stroke="#f2f4f8" stroke-width="3"/>
<line x1="27.5" y1="719.5" x2="35.5" y2="727.5" stroke="#f2f4f8" stroke-width="6"/>
<line x1="15" y1="727" x2="34" y2="708" stroke="#f2f4f8" stroke-width="3"/>
<circle cx="35.8" cy="706.2" r="4.6" fill="#f2f4f8"/><circle cx="38.2" cy="703.8" r="2.2" fill="#181d25"/>
<circle cx="14.2" cy="727.4" r="4.6" fill="#f2f4f8"/><circle cx="11.8" cy="729.8" r="2.2" fill="#181d25"/>
<rect x="16.2" y="791.6" width="18.6" height="8.6" fill="none" stroke="#f2f4f8" stroke-width="2.4"/>
<rect x="15" y="803" width="8" height="6.5" fill="#f2f4f8"/>
<rect x="25" y="803" width="10.8" height="2.2" fill="#f2f4f8"/><rect x="25" y="807.3" width="10.8" height="2.2" fill="#f2f4f8"/>
<rect x="15" y="812.2" width="20.8" height="2.6" fill="#f2f4f8"/>
<circle cx="25.2" cy="1054.9" r="13.6" fill="none" stroke="#f2f4f8" stroke-width="2.6"/>
<path d="M25.2,1041.3 A13.6,13.6 0 0 1 25.2,1068.5 Z" fill="#f2f4f8"/>
</svg>
</body></html>
